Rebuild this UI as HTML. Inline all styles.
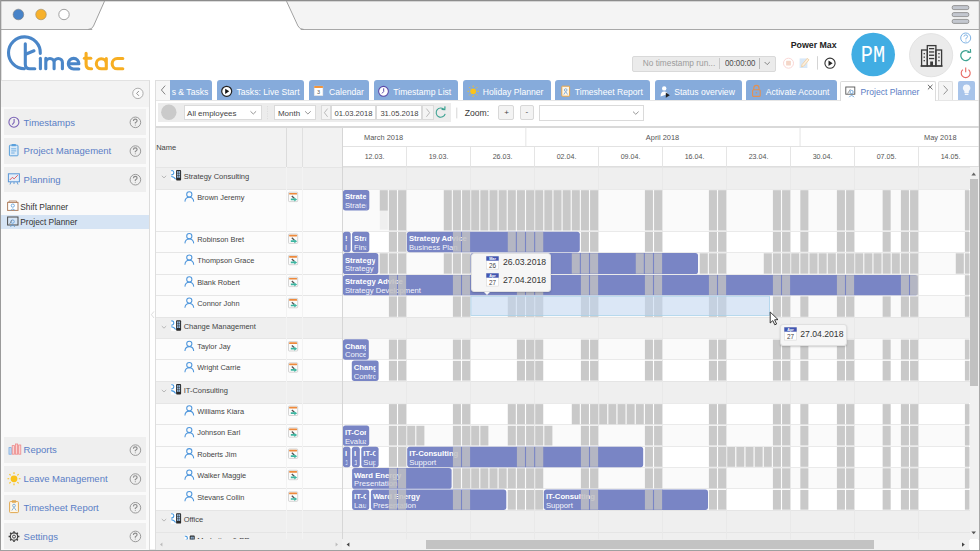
<!DOCTYPE html>
<html><head><meta charset="utf-8"><title>TimeTac Project Planner</title>
<style>
html,body{margin:0;padding:0;}
body{width:980px;height:551px;overflow:hidden;position:relative;background:#fff;font-family:"Liberation Sans", sans-serif;}
.t{position:absolute;white-space:nowrap;}
.b{position:absolute;box-sizing:border-box;}
svg{position:absolute;overflow:visible;}
</style></head><body>
<svg style="left:0;top:0" width="980" height="551" viewBox="0 0 980 551">
<rect x="0" y="0" width="980" height="30" fill="#f4f4f4"/>
<path d="M0 29.5 H93 M300 29.5 H980" stroke="#a8a8a8" stroke-width="1.2"/>
<path d="M92 30 L104.5 1 H286.5 L301 30 Z" fill="#ffffff"/>
<path d="M88 29.5 Q92 29.5 93.5 26 L104.5 1.2 M286.5 1.2 L298 26 Q299.5 29.5 304 29.5" stroke="#a0a0a0" stroke-width="1" fill="none"/>
<rect x="0" y="0" width="980" height="1.3" fill="#8c8c8c"/>
<rect x="0" y="0" width="1.3" height="551" fill="#9a9a9a"/>
<rect x="978.8" y="0" width="1.2" height="551" fill="#a8a8a8"/>
<rect x="0" y="549.8" width="980" height="1.2" fill="#a0a0a0"/>
<circle cx="18.4" cy="14.5" r="5.3" fill="#4783c8" stroke="#7a7a7a" stroke-width="0.6"/>
<circle cx="41" cy="14.5" r="5.3" fill="#f7b12b" stroke="#9a8a6a" stroke-width="0.6"/>
<circle cx="64" cy="14.5" r="5.2" fill="#ffffff" stroke="#8a8a8a" stroke-width="0.8"/>
<g fill="#c3c7cf" stroke="#8e8e8e" stroke-width="0.9">
<rect x="952.2" y="5.6" width="16.6" height="4" rx="1.6"/>
<rect x="952.2" y="12.6" width="16.6" height="4" rx="1.6"/>
<rect x="952.2" y="19.4" width="16.6" height="4" rx="1.6"/>
</g>
</svg><svg style="left:0;top:0" width="140" height="80" viewBox="0 0 140 80">
<g fill="none" stroke="#4a86c8" stroke-width="3.1" stroke-linecap="round" stroke-linejoin="round">
<path d="M24.3 68.7 A15.9 15.9 0 1 1 40.3 53.4"/>
<path d="M25.3 43.8 V64.3 Q25.3 68.8 29.8 68.8 H34.8"/>
<path d="M25.6 54.2 L34 50.8"/>
<path d="M40.4 58.2 V68.8"/>
<path d="M45.8 68.8 V58.4 M45.8 62.6 A4.15 4.15 0 0 1 54.1 62.6 V68.8 M54.1 62.6 A4.15 4.15 0 0 1 62.4 62.6 V68.8"/>
<path d="M68.3 63.8 H78.9 A5.3 5.3 0 1 0 73.6 69 H78.8"/>
</g>
<g fill="none" stroke="#f7ae22" stroke-width="3.1" stroke-linecap="round" stroke-linejoin="round">
<path d="M86.1 53.3 V64.3 Q86.1 68.8 90.6 68.8 H91.6"/>
<path d="M84.4 58.3 H90.8"/>
<path d="M106.3 58.6 V68.8 M106.3 63.7 A5 5 0 1 0 101.3 68.8 H106"/>
<path d="M122.8 58.5 H117.3 A5.15 5.15 0 0 0 117.3 68.8 H122.8"/>
</g>
</svg><div class="t" style="left:790.70px;top:41.15px;font-size:8.8px;line-height:8.8px;color:#222;font-weight:bold;">Power Max</div><div class="b" style="left:632.20px;top:55.70px;width:144.20px;height:16.10px;background:#ebebeb;border:1px solid #d9d9d9;border-radius:2px;"></div><div class="t" style="left:642.80px;top:59.47px;font-size:8.3px;line-height:8.3px;color:#9b9b9b;font-weight:normal;">No timestamp run...</div><div class="b" style="left:719.40px;top:58.20px;width:1.00px;height:11.00px;background:#c9c9c9;"></div><div class="t" style="left:724.80px;top:59.32px;font-size:8.6px;line-height:8.6px;color:#4a4a4a;font-weight:normal;transform:scaleX(0.91);transform-origin:0 0;">00:00:00</div><div class="b" style="left:759.20px;top:58.20px;width:1.00px;height:11.20px;background:#b9b9b9;"></div><svg style="left:0;top:0" width="980" height="80" viewBox="0 0 980 80">
<path d="M764.6 62 L767.2 64.6 L769.8 62" fill="none" stroke="#777" stroke-width="0.9"/>
<circle cx="788.5" cy="63.2" r="5" fill="none" stroke="#f8d2d0" stroke-width="0.9"/>
<rect x="786.1" y="60.8" width="4.8" height="4.8" rx="0.6" fill="#f4d6c8"/>
<path d="M799.6 58.4 h7.8 v9.6 h-7.8 z" fill="#d8e8f8"/>
<path d="M801.6 67 L802 64.6 L807.2 58.4 L809 59.8 L803.8 66 Z" fill="#fbf0e0" stroke="#f2c890" stroke-width="0.7"/>
<rect x="817" y="56.2" width="1" height="13.4" fill="#d4d4d4"/>
<circle cx="830" cy="63.2" r="5.1" fill="none" stroke="#333" stroke-width="1.1"/>
<path d="M828.5 60.5 L832.6 63.2 L828.5 65.9 Z" fill="#222"/>
<circle cx="873.2" cy="54.5" r="21.8" fill="#41ade3"/>
<circle cx="931.1" cy="55.2" r="21.6" fill="#ebebeb" stroke="#dedede" stroke-width="0.8"/>
<g fill="none" stroke="#3a3a3a" stroke-width="1.3">
<rect x="927.3" y="45.6" width="8.6" height="20.4"/>
<rect x="921.6" y="50" width="5.7" height="16"/>
<rect x="935.9" y="50" width="5.7" height="16"/>
<path d="M920.5 66 H942.6"/>
</g>
<g fill="#3a3a3a">
<rect x="929" y="48" width="5.2" height="1.3"/><rect x="929" y="51.3" width="5.2" height="1.3"/>
<rect x="929" y="54.6" width="5.2" height="1.3"/><rect x="929" y="57.9" width="5.2" height="1.3"/>
<rect x="930.2" y="61.5" width="2.8" height="4.5"/>
<rect x="923.6" y="53" width="1.3" height="1.3"/><rect x="923.6" y="56.5" width="1.3" height="1.3"/><rect x="923.6" y="60" width="1.3" height="1.3"/>
<rect x="938.3" y="53" width="1.3" height="1.3"/><rect x="938.3" y="56.5" width="1.3" height="1.3"/><rect x="938.3" y="60" width="1.3" height="1.3"/>
</g>
<circle cx="965.7" cy="38" r="5" fill="none" stroke="#7fb3e4" stroke-width="1"/>
<path d="M963.9 36.6 Q964 34.9 965.8 34.9 Q967.6 34.9 967.6 36.5 Q967.6 37.6 965.9 38.4 V39.4" fill="none" stroke="#7fb3e4" stroke-width="1"/>
<circle cx="965.9" cy="41" r="0.6" fill="#7fb3e4"/>
<path d="M969.8 52.6 A5 5 0 1 0 970.6 56.8" fill="none" stroke="#3fa392" stroke-width="1.3"/>
<path d="M967.4 52.4 L970.6 52.2 L970.4 49" fill="none" stroke="#3fa392" stroke-width="1.2"/>
<path d="M962.9 69.6 A4.5 4.5 0 1 0 968.5 69.6" fill="none" stroke="#e86a64" stroke-width="1.1"/>
<path d="M965.7 67.4 V72.2" stroke="#e86a64" stroke-width="1.1"/>
</svg><div class="t" style="left:673.40px;width:400px;text-align:center;top:44.73px;font-size:23px;line-height:23px;color:#ffffff;font-weight:normal;font-family:'Liberation Mono', monospace;transform:scaleX(0.88);">PM</div><div class="b" style="left:1.30px;top:80.20px;width:148.50px;height:469.60px;background:#fafafa;border-right:1px solid #dcdcdc;border-top:1px solid #e2e2e2;"></div><div class="b" style="left:1.30px;top:81.00px;width:147.50px;height:25.90px;background:#f3f3f3;"></div><svg style="left:0;top:0" width="160" height="551" viewBox="0 0 160 551">
<circle cx="137.9" cy="93.4" r="5.2" fill="#fbfbfb" stroke="#9a9a9a" stroke-width="0.8"/>
<path d="M138.9 91 L136.6 93.4 L138.9 95.8" fill="none" stroke="#888" stroke-width="0.9"/>
</svg><div class="b" style="left:4.00px;top:108.80px;width:142.00px;height:26.70px;background:#efefef;"></div><div class="t" style="left:23.60px;top:117.51px;font-size:9.5px;line-height:9.5px;color:#5a7ec6;font-weight:normal;">Timestamps</div><svg style="left:0;top:0" width="160" height="551" viewBox="0 0 160 551">
<circle cx="135.4" cy="122.35" r="5.3" fill="none" stroke="#9a9a9a" stroke-width="1.0"/>
<path d="M133.4 120.95 Q133.5 119.05 135.3 119.05 Q137.1 119.05 137.1 120.75 Q137.1 121.85 135.3 122.75 V123.55" fill="none" stroke="#8a8a8a" stroke-width="1.15"/>
<circle cx="135.3" cy="124.95" r="0.55" fill="#9c9c9c"/>
</svg><div class="b" style="left:4.00px;top:137.80px;width:142.00px;height:26.20px;background:#efefef;"></div><div class="t" style="left:23.60px;top:146.26px;font-size:9.5px;line-height:9.5px;color:#5a7ec6;font-weight:normal;">Project Management</div><svg style="left:0;top:0" width="160" height="551" viewBox="0 0 160 551">
<circle cx="135.4" cy="151.10" r="5.3" fill="none" stroke="#9a9a9a" stroke-width="1.0"/>
<path d="M133.4 149.70 Q133.5 147.80 135.3 147.80 Q137.1 147.80 137.1 149.50 Q137.1 150.60 135.3 151.50 V152.30" fill="none" stroke="#8a8a8a" stroke-width="1.15"/>
<circle cx="135.3" cy="153.70" r="0.55" fill="#9c9c9c"/>
</svg><div class="b" style="left:4.00px;top:166.90px;width:142.00px;height:25.20px;background:#efefef;"></div><div class="t" style="left:23.60px;top:174.86px;font-size:9.5px;line-height:9.5px;color:#5a7ec6;font-weight:normal;">Planning</div><svg style="left:0;top:0" width="160" height="551" viewBox="0 0 160 551">
<circle cx="135.4" cy="179.70" r="5.3" fill="none" stroke="#9a9a9a" stroke-width="1.0"/>
<path d="M133.4 178.30 Q133.5 176.40 135.3 176.40 Q137.1 176.40 137.1 178.10 Q137.1 179.20 135.3 180.10 V180.90" fill="none" stroke="#8a8a8a" stroke-width="1.15"/>
<circle cx="135.3" cy="182.30" r="0.55" fill="#9c9c9c"/>
</svg><div class="b" style="left:4.00px;top:437.00px;width:142.00px;height:25.90px;background:#efefef;"></div><div class="t" style="left:23.60px;top:445.31px;font-size:9.5px;line-height:9.5px;color:#5a7ec6;font-weight:normal;">Reports</div><svg style="left:0;top:0" width="160" height="551" viewBox="0 0 160 551">
<circle cx="135.4" cy="450.15" r="5.3" fill="none" stroke="#9a9a9a" stroke-width="1.0"/>
<path d="M133.4 448.75 Q133.5 446.85 135.3 446.85 Q137.1 446.85 137.1 448.55 Q137.1 449.65 135.3 450.55 V451.35" fill="none" stroke="#8a8a8a" stroke-width="1.15"/>
<circle cx="135.3" cy="452.75" r="0.55" fill="#9c9c9c"/>
</svg><div class="b" style="left:4.00px;top:465.80px;width:142.00px;height:26.10px;background:#efefef;"></div><div class="t" style="left:23.60px;top:474.21px;font-size:9.5px;line-height:9.5px;color:#5a7ec6;font-weight:normal;">Leave Management</div><svg style="left:0;top:0" width="160" height="551" viewBox="0 0 160 551">
<circle cx="135.4" cy="479.05" r="5.3" fill="none" stroke="#9a9a9a" stroke-width="1.0"/>
<path d="M133.4 477.65 Q133.5 475.75 135.3 475.75 Q137.1 475.75 137.1 477.45 Q137.1 478.55 135.3 479.45 V480.25" fill="none" stroke="#8a8a8a" stroke-width="1.15"/>
<circle cx="135.3" cy="481.65" r="0.55" fill="#9c9c9c"/>
</svg><div class="b" style="left:4.00px;top:494.70px;width:142.00px;height:25.70px;background:#efefef;"></div><div class="t" style="left:23.60px;top:502.91px;font-size:9.5px;line-height:9.5px;color:#5a7ec6;font-weight:normal;">Timesheet Report</div><svg style="left:0;top:0" width="160" height="551" viewBox="0 0 160 551">
<circle cx="135.4" cy="507.75" r="5.3" fill="none" stroke="#9a9a9a" stroke-width="1.0"/>
<path d="M133.4 506.35 Q133.5 504.45 135.3 504.45 Q137.1 504.45 137.1 506.15 Q137.1 507.25 135.3 508.15 V508.95" fill="none" stroke="#8a8a8a" stroke-width="1.15"/>
<circle cx="135.3" cy="510.35" r="0.55" fill="#9c9c9c"/>
</svg><div class="b" style="left:4.00px;top:523.30px;width:142.00px;height:25.90px;background:#efefef;"></div><div class="t" style="left:23.60px;top:531.61px;font-size:9.5px;line-height:9.5px;color:#5a7ec6;font-weight:normal;">Settings</div><svg style="left:0;top:0" width="160" height="551" viewBox="0 0 160 551">
<circle cx="135.4" cy="536.45" r="5.3" fill="none" stroke="#9a9a9a" stroke-width="1.0"/>
<path d="M133.4 535.05 Q133.5 533.15 135.3 533.15 Q137.1 533.15 137.1 534.85 Q137.1 535.95 135.3 536.85 V537.65" fill="none" stroke="#8a8a8a" stroke-width="1.15"/>
<circle cx="135.3" cy="539.05" r="0.55" fill="#9c9c9c"/>
</svg><svg style="left:0;top:0" width="160" height="551" viewBox="0 0 160 551">
<circle cx="13.9" cy="122.2" r="5" fill="none" stroke="#7a62b6" stroke-width="1.1"/>
<path d="M14.1 118.9 V122.4 L12.3 124.6" fill="none" stroke="#7a62b6" stroke-width="1.1"/>
<rect x="9.4" y="145.2" width="8.6" height="10.6" rx="0.8" fill="#dcebf8" stroke="#5aa0dc" stroke-width="1"/>
<rect x="11.6" y="144" width="4.2" height="2.2" fill="#5aa0dc"/>
<path d="M11.2 148.8 H16.2 M11.2 150.9 H16.2 M11.2 153 H14.6" stroke="#5aa0dc" stroke-width="0.8"/>
<rect x="8.4" y="173.8" width="11" height="8" fill="#e4eefa" stroke="#5a96d6" stroke-width="1"/>
<path d="M9.8 180 L12.3 177.4 L14.2 178.8 L17.8 175.2" fill="none" stroke="#e05050" stroke-width="0.9"/>
<path d="M11 182 L10 184.5 M17 182 L18 184.5 M14 182 V184" stroke="#5a96d6" stroke-width="0.9"/>
<rect x="9" y="447.6" width="2.2" height="6.6" fill="#cfe2f6" stroke="#74a8e0" stroke-width="0.8"/>
<rect x="12.2" y="445.6" width="2.2" height="8.6" fill="#f8d4d4" stroke="#ee8a8a" stroke-width="0.8"/>
<rect x="15.4" y="444" width="2.2" height="10.2" fill="#f8d4d4" stroke="#ee8a8a" stroke-width="0.8"/>
<rect x="18.6" y="445" width="2.2" height="9.2" fill="#f8d4d4" stroke="#ee8a8a" stroke-width="0.8"/>
<circle cx="14" cy="478.8" r="3.4" fill="#f9c21a"/>
<g stroke="#f9c21a" stroke-width="1.1">
<path d="M14 472.3 V474 M14 483.6 V485.3 M7.5 478.8 H9.2 M18.8 478.8 H20.5 M9.4 474.2 L10.6 475.4 M17.4 482.2 L18.6 483.4 M9.4 483.4 L10.6 482.2 M17.4 475.4 L18.6 474.2"/>
</g>
<rect x="9.6" y="501.6" width="8.8" height="11" rx="0.8" fill="#fff7e8" stroke="#e0a850" stroke-width="1"/>
<rect x="12" y="500.3" width="4" height="2.4" fill="#e0a850"/>
<circle cx="14" cy="505.6" r="1.4" fill="none" stroke="#6aa2d8" stroke-width="0.8"/>
<path d="M11.8 510.5 L14 507.3 L16.2 510.5" fill="none" stroke="#6aa2d8" stroke-width="0.8"/>
<g transform="translate(14 536.6)">
<circle r="3.7" fill="none" stroke="#3c3c3c" stroke-width="1.1"/>
<circle r="1.5" fill="none" stroke="#3c3c3c" stroke-width="0.9"/>
<g stroke="#3c3c3c" stroke-width="1.5">
<path d="M0 -5.4 V-3.8 M0 5.4 V3.8 M-5.4 0 H-3.8 M5.4 0 H3.8 M-3.8 -3.8 L-2.7 -2.7 M3.8 3.8 L2.7 2.7 M-3.8 3.8 L-2.7 2.7 M3.8 -3.8 L2.7 -2.7"/>
</g></g>
<rect x="7.6" y="202.4" width="10.4" height="8" fill="#fff" stroke="#b08060" stroke-width="1"/>
<circle cx="12.8" cy="205.6" r="1.6" fill="none" stroke="#5a9ad8" stroke-width="0.8"/>
<path d="M10.6 210.4 Q12.8 207.4 15 210.4" fill="none" stroke="#5a9ad8" stroke-width="0.8"/>
<path d="M9 202.4 V201 H16.6 V202.4" fill="none" stroke="#b08060" stroke-width="0.8"/>
</svg><div class="b" style="left:1.30px;top:214.80px;width:147.50px;height:14.20px;background:#d6e4f4;"></div><svg style="left:0;top:0" width="160" height="551" viewBox="0 0 160 551">
<rect x="7.6" y="217" width="10.4" height="8" fill="none" stroke="#4a4a4a" stroke-width="1"/>
<circle cx="12.6" cy="221.6" r="1.7" fill="none" stroke="#5a9ad8" stroke-width="0.8"/>
<path d="M10.4 227 Q12.6 223.2 14.8 227" fill="none" stroke="#5a9ad8" stroke-width="0.8"/>
<path d="M9.6 224 L12 220" stroke="#777" stroke-width="0.7"/>
</svg><div class="t" style="left:20.30px;top:203.23px;font-size:8.35px;line-height:8.35px;color:#333;font-weight:normal;">Shift Planner</div><div class="t" style="left:20.30px;top:218.13px;font-size:8.35px;line-height:8.35px;color:#333;font-weight:normal;">Project Planner</div><div class="b" style="left:155.20px;top:80.20px;width:1.00px;height:469.60px;background:#dedede;"></div><div class="b" style="left:156.00px;top:99.80px;width:822.80px;height:1.00px;background:#e6e6e6;"></div><div class="b" style="left:156.20px;top:80.20px;width:14.40px;height:19.80px;background:#f6f6f6;border-top:1px solid #dedede;"></div><svg style="left:0;top:0" width="980" height="130" viewBox="0 0 980 130">
<path d="M165.2 85.6 L161.4 90 L165.2 94.4" fill="none" stroke="#777" stroke-width="0.9"/>
</svg><div class="b" style="left:170.40px;top:80.20px;width:42.10px;height:19.60px;background:#86abdb;border-radius:0 3px 0 0;"></div><div class="t" style="left:171.70px;top:87.52px;font-size:8.6px;line-height:8.6px;color:#ffffff;font-weight:normal;">s &amp; Tasks</div><div class="b" style="left:217.00px;top:80.20px;width:87.30px;height:19.60px;background:#86abdb;border-radius:3px 3px 0 0;"></div><div class="t" style="left:236.50px;top:87.52px;font-size:8.6px;line-height:8.6px;color:#ffffff;font-weight:normal;">Tasks: Live Start</div><div class="b" style="left:309.20px;top:80.20px;width:59.60px;height:19.60px;background:#86abdb;border-radius:3px 3px 0 0;"></div><div class="t" style="left:329.00px;top:87.52px;font-size:8.6px;line-height:8.6px;color:#ffffff;font-weight:normal;">Calendar</div><div class="b" style="left:374.00px;top:80.20px;width:84.40px;height:19.60px;background:#86abdb;border-radius:3px 3px 0 0;"></div><div class="t" style="left:393.30px;top:87.52px;font-size:8.6px;line-height:8.6px;color:#ffffff;font-weight:normal;">Timestamp List</div><div class="b" style="left:463.10px;top:80.20px;width:87.60px;height:19.60px;background:#86abdb;border-radius:3px 3px 0 0;"></div><div class="t" style="left:482.70px;top:87.52px;font-size:8.6px;line-height:8.6px;color:#ffffff;font-weight:normal;">Holiday Planner</div><div class="b" style="left:555.20px;top:80.20px;width:94.80px;height:19.60px;background:#86abdb;border-radius:3px 3px 0 0;"></div><div class="t" style="left:574.80px;top:87.52px;font-size:8.6px;line-height:8.6px;color:#ffffff;font-weight:normal;">Timesheet Report</div><div class="b" style="left:654.60px;top:80.20px;width:87.20px;height:19.60px;background:#86abdb;border-radius:3px 3px 0 0;"></div><div class="t" style="left:674.20px;top:87.52px;font-size:8.6px;line-height:8.6px;color:#ffffff;font-weight:normal;">Status overview</div><div class="b" style="left:746.00px;top:80.20px;width:90.60px;height:19.60px;background:#86abdb;border-radius:3px 3px 0 0;"></div><div class="t" style="left:765.80px;top:87.52px;font-size:8.6px;line-height:8.6px;color:#ffffff;font-weight:normal;">Activate Account</div><svg style="left:0;top:1.1px" width="980" height="130" viewBox="0 0 980 130">
<circle cx="226.7" cy="90.3" r="5" fill="#ffffff" stroke="#222" stroke-width="1.2"/>
<path d="M225.2 87.7 L229.2 90.3 L225.2 92.9 Z" fill="#111"/>
<rect x="314.2" y="85.1" width="8.7" height="9.6" fill="#fff" stroke="#ddd" stroke-width="0.5"/>
<rect x="314.2" y="85.1" width="8.7" height="1.8" fill="#ef8a2a"/>
<text x="318.5" y="93.3" font-size="5.5" text-anchor="middle" fill="#555" font-family="Liberation Sans">3</text>
<circle cx="383.5" cy="90.3" r="4.9" fill="#fff" stroke="#5b4aa8" stroke-width="1.1"/>
<path d="M383.7 87.3 V90.5 L382 92.4" fill="none" stroke="#5b4aa8" stroke-width="1"/>
<circle cx="473.2" cy="90.3" r="2.9" fill="#fbc31a"/>
<g stroke="#fbc31a" stroke-width="1"><path d="M473.2 84.6 V86 M473.2 94.6 V96 M467.5 90.3 H468.9 M477.5 90.3 H478.9 M469.2 86.3 L470.2 87.3 M476.2 93.3 L477.2 94.3 M469.2 94.3 L470.2 93.3 M476.2 87.3 L477.2 86.3"/></g>
<rect x="561.8" y="85.2" width="7.8" height="10" rx="0.6" fill="#fff6e6" stroke="#e4a44a" stroke-width="1"/>
<circle cx="565.7" cy="89" r="1.3" fill="none" stroke="#6aa0d8" stroke-width="0.8"/>
<path d="M563.8 93.5 L565.7 90.6 L567.6 93.5" fill="none" stroke="#6aa0d8" stroke-width="0.8"/>
<circle cx="664.2" cy="87.4" r="2.2" fill="#fff"/>
<path d="M660.6 95.5 Q660.6 90.6 664.2 90.6 Q667 90.6 667.6 93" fill="#fff"/>
<path d="M665.8 91.6 L669.8 94.2 L665.8 96.8 Z" fill="#222"/>
<path d="M753.8 88.8 V87 A2.6 2.6 0 0 1 759 87 V88.8" fill="none" stroke="#e49050" stroke-width="1.1"/>
<rect x="752.6" y="88.8" width="7.6" height="6.6" rx="1" fill="none" stroke="#e49050" stroke-width="1.1"/>
<rect x="755.6" y="91.2" width="1.6" height="1.2" fill="#e49050"/>
</svg><div class="b" style="left:840.40px;top:80.60px;width:95.20px;height:20.20px;background:#fff;border:1px solid #dcdcdc;border-bottom:none;border-radius:2px 2px 0 0;"></div><div class="t" style="left:860.60px;top:87.72px;font-size:8.6px;line-height:8.6px;color:#5b7dc4;font-weight:normal;">Project Planner</div><svg style="left:0;top:1.2px" width="980" height="130" viewBox="0 0 980 130">
<rect x="845.8" y="86" width="9" height="7.2" fill="none" stroke="#555" stroke-width="0.9"/>
<circle cx="851.6" cy="91" r="1.6" fill="none" stroke="#5a9ad8" stroke-width="0.8"/>
<path d="M849.2 96.2 Q851.6 92.8 854 96.2" fill="none" stroke="#5a9ad8" stroke-width="0.8"/>
<path d="M847.6 92.5 L850.4 88.2" stroke="#777" stroke-width="0.7"/>
<path d="M927.9 83.8 L932.5 88.4 M932.5 83.8 L927.9 88.4" stroke="#555" stroke-width="0.9"/>
</svg><div class="b" style="left:938.00px;top:80.60px;width:15.20px;height:19.40px;background:#f5f5f5;border:1px solid #dedede;border-bottom:none;border-radius:2px 2px 0 0;"></div><div class="b" style="left:957.80px;top:80.60px;width:17.60px;height:19.40px;background:#a8c4ea;border-radius:2px 2px 0 0;"></div><svg style="left:0;top:0" width="980" height="130" viewBox="0 0 980 130">
<path d="M943.6 85.6 L947.6 90 L943.6 94.4" fill="none" stroke="#888" stroke-width="0.9"/>
<path d="M966.6 84.6 A3.6 3.6 0 0 1 968.8 91.2 V93 H964.4 V91.2 A3.6 3.6 0 0 1 966.6 84.6 Z" fill="#f4f7fc"/>
<rect x="964.8" y="93.6" width="3.6" height="1.4" fill="#f4f7fc"/>
</svg><div class="b" style="left:157.80px;top:103.20px;width:293.00px;height:18.80px;background:#ececec;"></div><svg style="left:0;top:0" width="980" height="130" viewBox="0 0 980 130">
<circle cx="168.8" cy="112.3" r="7.7" fill="#cacaca"/>
</svg><div class="b" style="left:183.50px;top:105.20px;width:78.00px;height:15.00px;background:#fff;border:1px solid #dadada;"></div><svg style="left:0;top:0" width="980" height="130"><path d="M250.50 111.30 L253.30 114.00 L256.10 111.30" fill="none" stroke="#888" stroke-width="0.9"/></svg><div class="t" style="left:187.10px;top:109.77px;font-size:7.95px;line-height:7.95px;color:#444;font-weight:normal;">All employees</div><svg style="left:0;top:0" width="980" height="130"><path d="M267.5 106 V120" stroke="#dadada" stroke-width="0.8" stroke-dasharray="1.2 1.2"/></svg><div class="b" style="left:274.30px;top:105.20px;width:41.80px;height:15.00px;background:#fff;border:1px solid #dadada;"></div><svg style="left:0;top:0" width="980" height="130"><path d="M305.10 111.30 L307.90 114.00 L310.70 111.30" fill="none" stroke="#888" stroke-width="0.9"/></svg><div class="t" style="left:278.00px;top:109.77px;font-size:7.95px;line-height:7.95px;color:#444;font-weight:normal;">Month</div><div class="b" style="left:320.80px;top:105.20px;width:10.40px;height:15.00px;background:#f4f4f4;border:1px solid #dadada;"></div><div class="b" style="left:331.00px;top:105.20px;width:45.20px;height:15.00px;background:#fff;border:1px solid #dadada;"></div><div class="b" style="left:376.00px;top:105.20px;width:46.20px;height:15.00px;background:#fff;border:1px solid #dadada;"></div><div class="b" style="left:422.00px;top:105.20px;width:11.60px;height:15.00px;background:#f4f4f4;border:1px solid #dadada;"></div><div class="t" style="left:334.50px;top:110.07px;font-size:7.6px;line-height:7.6px;color:#444;font-weight:normal;">01.03.2018</div><div class="t" style="left:380.40px;top:110.07px;font-size:7.6px;line-height:7.6px;color:#444;font-weight:normal;">31.05.2018</div><svg style="left:0;top:0" width="980" height="130" viewBox="0 0 980 130">
<path d="M327.6 108.6 L324.4 112.7 L327.6 116.8" fill="none" stroke="#aaa" stroke-width="0.8"/>
<path d="M426.4 108.6 L429.6 112.7 L426.4 116.8" fill="none" stroke="#aaa" stroke-width="0.8"/>
<path d="M444.4 109.8 A4.6 4.6 0 1 0 445.2 113.8" fill="none" stroke="#3aa191" stroke-width="1.1"/>
<path d="M441.6 109.4 L444.8 109.6 L445 106.4" fill="none" stroke="#3aa191" stroke-width="1.2"/>
<path d="M456.8 107.6 V118.4" stroke="#d0d0d0" stroke-width="0.9"/>
</svg><div class="t" style="left:464.70px;top:108.72px;font-size:8.6px;line-height:8.6px;color:#3a3a3a;font-weight:normal;">Zoom:</div><div class="b" style="left:498.40px;top:105.20px;width:16.10px;height:15.30px;background:#f3f3f3;border:1px solid #d8d8d8;border-radius:2px;"></div><div class="b" style="left:519.80px;top:105.20px;width:14.10px;height:15.30px;background:#f3f3f3;border:1px solid #d8d8d8;border-radius:2px;"></div><div class="t" style="left:306.50px;width:400px;text-align:center;top:108.53px;font-size:8px;line-height:8px;color:#444;font-weight:normal;">+</div><div class="t" style="left:326.90px;width:400px;text-align:center;top:108.23px;font-size:8px;line-height:8px;color:#444;font-weight:normal;">-</div><div class="b" style="left:539.30px;top:105.20px;width:104.70px;height:15.60px;background:#fff;border:1px solid #dadada;"></div><svg style="left:0;top:0" width="980" height="130"><path d="M633.00 111.60 L635.80 114.30 L638.60 111.60" fill="none" stroke="#888" stroke-width="0.9"/></svg><div class="b" style="left:156.00px;top:126.20px;width:822.80px;height:1.40px;background:#d9d9d9;"></div><div class="b" style="left:156.00px;top:127.60px;width:186.20px;height:39.60px;background:#f2f2f2;"></div><div class="t" style="left:156.20px;top:143.55px;font-size:7.5px;line-height:7.5px;color:#444;font-weight:normal;">Name</div><div class="b" style="left:156.00px;top:166.50px;width:813.50px;height:22.90px;background:#efefef;border-top:1px solid #e5e5e5;"></div><div class="b" style="left:156.00px;top:188.70px;width:186.20px;height:42.50px;background:#fcfcfc;border-top:1px solid #e6e6e6;"></div><div class="b" style="left:342.20px;top:188.70px;width:627.30px;height:42.50px;background:#fafafa;border-top:1px solid #eaeaea;"></div><div class="b" style="left:156.00px;top:230.50px;width:186.20px;height:22.00px;background:#fcfcfc;border-top:1px solid #e6e6e6;"></div><div class="b" style="left:342.20px;top:230.50px;width:627.30px;height:22.00px;background:#ffffff;border-top:1px solid #eaeaea;"></div><div class="b" style="left:156.00px;top:251.80px;width:186.20px;height:22.60px;background:#fcfcfc;border-top:1px solid #e6e6e6;"></div><div class="b" style="left:342.20px;top:251.80px;width:627.30px;height:22.60px;background:#fafafa;border-top:1px solid #eaeaea;"></div><div class="b" style="left:156.00px;top:273.70px;width:186.20px;height:21.90px;background:#fcfcfc;border-top:1px solid #e6e6e6;"></div><div class="b" style="left:342.20px;top:273.70px;width:627.30px;height:21.90px;background:#ffffff;border-top:1px solid #eaeaea;"></div><div class="b" style="left:156.00px;top:294.90px;width:186.20px;height:22.60px;background:#fcfcfc;border-top:1px solid #e6e6e6;"></div><div class="b" style="left:342.20px;top:294.90px;width:627.30px;height:22.60px;background:#fafafa;border-top:1px solid #eaeaea;"></div><div class="b" style="left:156.00px;top:316.80px;width:813.50px;height:22.00px;background:#efefef;border-top:1px solid #e5e5e5;"></div><div class="b" style="left:156.00px;top:338.10px;width:186.20px;height:21.90px;background:#fcfcfc;border-top:1px solid #e6e6e6;"></div><div class="b" style="left:342.20px;top:338.10px;width:627.30px;height:21.90px;background:#fafafa;border-top:1px solid #eaeaea;"></div><div class="b" style="left:156.00px;top:359.30px;width:186.20px;height:22.00px;background:#fcfcfc;border-top:1px solid #e6e6e6;"></div><div class="b" style="left:342.20px;top:359.30px;width:627.30px;height:22.00px;background:#ffffff;border-top:1px solid #eaeaea;"></div><div class="b" style="left:156.00px;top:380.60px;width:813.50px;height:22.70px;background:#efefef;border-top:1px solid #e5e5e5;"></div><div class="b" style="left:156.00px;top:402.60px;width:186.20px;height:22.40px;background:#fcfcfc;border-top:1px solid #e6e6e6;"></div><div class="b" style="left:342.20px;top:402.60px;width:627.30px;height:22.40px;background:#ffffff;border-top:1px solid #eaeaea;"></div><div class="b" style="left:156.00px;top:424.30px;width:186.20px;height:21.90px;background:#fcfcfc;border-top:1px solid #e6e6e6;"></div><div class="b" style="left:342.20px;top:424.30px;width:627.30px;height:21.90px;background:#fafafa;border-top:1px solid #eaeaea;"></div><div class="b" style="left:156.00px;top:445.50px;width:186.20px;height:22.00px;background:#fcfcfc;border-top:1px solid #e6e6e6;"></div><div class="b" style="left:342.20px;top:445.50px;width:627.30px;height:22.00px;background:#ffffff;border-top:1px solid #eaeaea;"></div><div class="b" style="left:156.00px;top:466.80px;width:186.20px;height:22.30px;background:#fcfcfc;border-top:1px solid #e6e6e6;"></div><div class="b" style="left:342.20px;top:466.80px;width:627.30px;height:22.30px;background:#fafafa;border-top:1px solid #eaeaea;"></div><div class="b" style="left:156.00px;top:488.40px;width:186.20px;height:22.00px;background:#fcfcfc;border-top:1px solid #e6e6e6;"></div><div class="b" style="left:342.20px;top:488.40px;width:627.30px;height:22.00px;background:#ffffff;border-top:1px solid #eaeaea;"></div><div class="b" style="left:156.00px;top:509.70px;width:813.50px;height:22.50px;background:#efefef;border-top:1px solid #e5e5e5;"></div><div class="b" style="left:156.00px;top:531.50px;width:813.50px;height:8.00px;background:#efefef;border-top:1px solid #e5e5e5;"></div><div class="b" style="left:286.00px;top:127.60px;width:1.00px;height:39.60px;background:#dcdcdc;"></div><div class="b" style="left:302.00px;top:127.60px;width:1.00px;height:39.60px;background:#e0e0e0;"></div><div class="b" style="left:286.00px;top:167.20px;width:1.00px;height:372.30px;background:#f3f3f3;"></div><div class="b" style="left:302.00px;top:167.20px;width:1.00px;height:372.30px;background:#f3f3f3;"></div><div class="b" style="left:342.60px;top:127.60px;width:626.90px;height:39.60px;background:#fff;"></div><div class="b" style="left:342.60px;top:146.20px;width:636.20px;height:1.00px;background:#e2e2e2;"></div><div class="b" style="left:342.60px;top:166.40px;width:636.20px;height:1.00px;background:#dedede;"></div><svg style="left:0;top:0" width="980" height="551" viewBox="0 0 980 551"><rect x="525.40" y="127.6" width="0.9" height="18.8" fill="#e2e2e2"/><rect x="799.60" y="127.6" width="0.9" height="18.8" fill="#e2e2e2"/><rect x="406.05" y="147" width="0.9" height="20" fill="#e2e2e2"/><rect x="470.05" y="147" width="0.9" height="20" fill="#e2e2e2"/><rect x="534.05" y="147" width="0.9" height="20" fill="#e2e2e2"/><rect x="598.05" y="147" width="0.9" height="20" fill="#e2e2e2"/><rect x="662.05" y="147" width="0.9" height="20" fill="#e2e2e2"/><rect x="726.05" y="147" width="0.9" height="20" fill="#e2e2e2"/><rect x="790.05" y="147" width="0.9" height="20" fill="#e2e2e2"/><rect x="854.05" y="147" width="0.9" height="20" fill="#e2e2e2"/><rect x="918.05" y="147" width="0.9" height="20" fill="#e2e2e2"/></svg><div class="t" style="left:183.60px;width:400px;text-align:center;top:134.04px;font-size:7.4px;line-height:7.4px;color:#555;font-weight:normal;">March 2018</div><div class="t" style="left:462.50px;width:400px;text-align:center;top:134.04px;font-size:7.4px;line-height:7.4px;color:#555;font-weight:normal;">April 2018</div><div class="t" style="left:740.30px;width:400px;text-align:center;top:134.04px;font-size:7.4px;line-height:7.4px;color:#555;font-weight:normal;">May 2018</div><div class="t" style="left:174.50px;width:400px;text-align:center;top:154.49px;font-size:7.1px;line-height:7.1px;color:#555;font-weight:normal;">12.03.</div><div class="t" style="left:238.50px;width:400px;text-align:center;top:154.49px;font-size:7.1px;line-height:7.1px;color:#555;font-weight:normal;">19.03.</div><div class="t" style="left:302.50px;width:400px;text-align:center;top:154.49px;font-size:7.1px;line-height:7.1px;color:#555;font-weight:normal;">26.03.</div><div class="t" style="left:366.50px;width:400px;text-align:center;top:154.49px;font-size:7.1px;line-height:7.1px;color:#555;font-weight:normal;">02.04.</div><div class="t" style="left:430.50px;width:400px;text-align:center;top:154.49px;font-size:7.1px;line-height:7.1px;color:#555;font-weight:normal;">09.04.</div><div class="t" style="left:494.50px;width:400px;text-align:center;top:154.49px;font-size:7.1px;line-height:7.1px;color:#555;font-weight:normal;">16.04.</div><div class="t" style="left:558.50px;width:400px;text-align:center;top:154.49px;font-size:7.1px;line-height:7.1px;color:#555;font-weight:normal;">23.04.</div><div class="t" style="left:622.50px;width:400px;text-align:center;top:154.49px;font-size:7.1px;line-height:7.1px;color:#555;font-weight:normal;">30.04.</div><div class="t" style="left:686.50px;width:400px;text-align:center;top:154.49px;font-size:7.1px;line-height:7.1px;color:#555;font-weight:normal;">07.05.</div><div class="t" style="left:750.50px;width:400px;text-align:center;top:154.49px;font-size:7.1px;line-height:7.1px;color:#555;font-weight:normal;">14.05.</div><svg style="left:0;top:0" width="980" height="551" viewBox="0 0 980 551"><defs><clipPath id="gc"><rect x="342.6" y="167.2" width="626.9" height="372.3"/></clipPath><clipPath id="nc"><rect x="156" y="167.2" width="186.2" height="372.3"/></clipPath></defs><g clip-path="url(#gc)"><rect x="406.05" y="167.2" width="0.9" height="372.3" fill="#e8e8e8"/><rect x="470.05" y="167.2" width="0.9" height="372.3" fill="#e8e8e8"/><rect x="534.05" y="167.2" width="0.9" height="372.3" fill="#e8e8e8"/><rect x="598.05" y="167.2" width="0.9" height="372.3" fill="#e8e8e8"/><rect x="662.05" y="167.2" width="0.9" height="372.3" fill="#e8e8e8"/><rect x="726.05" y="167.2" width="0.9" height="372.3" fill="#e8e8e8"/><rect x="790.05" y="167.2" width="0.9" height="372.3" fill="#e8e8e8"/><rect x="854.05" y="167.2" width="0.9" height="372.3" fill="#e8e8e8"/><rect x="918.05" y="167.2" width="0.9" height="372.3" fill="#e8e8e8"/><rect x="388.91" y="190.20" width="8.04" height="40.30" fill="#c9c9c9"/><rect x="398.06" y="190.20" width="8.04" height="40.30" fill="#c9c9c9"/><rect x="443.77" y="190.20" width="8.04" height="40.30" fill="#c9c9c9"/><rect x="452.91" y="190.20" width="8.04" height="40.30" fill="#c9c9c9"/><rect x="462.06" y="190.20" width="8.04" height="40.30" fill="#c9c9c9"/><rect x="471.20" y="190.20" width="8.04" height="40.30" fill="#c9c9c9"/><rect x="480.34" y="190.20" width="8.04" height="40.30" fill="#c9c9c9"/><rect x="489.49" y="190.20" width="8.04" height="40.30" fill="#c9c9c9"/><rect x="498.63" y="190.20" width="8.04" height="40.30" fill="#c9c9c9"/><rect x="507.77" y="190.20" width="8.04" height="40.30" fill="#c9c9c9"/><rect x="516.91" y="190.20" width="8.04" height="40.30" fill="#c9c9c9"/><rect x="526.06" y="190.20" width="8.04" height="40.30" fill="#c9c9c9"/><rect x="535.20" y="190.20" width="8.04" height="40.30" fill="#c9c9c9"/><rect x="544.34" y="190.20" width="8.04" height="40.30" fill="#c9c9c9"/><rect x="553.49" y="190.20" width="8.04" height="40.30" fill="#c9c9c9"/><rect x="562.63" y="190.20" width="8.04" height="40.30" fill="#c9c9c9"/><rect x="571.77" y="190.20" width="8.04" height="40.30" fill="#c9c9c9"/><rect x="580.91" y="190.20" width="8.04" height="40.30" fill="#c9c9c9"/><rect x="590.06" y="190.20" width="8.04" height="40.30" fill="#c9c9c9"/><rect x="644.91" y="190.20" width="8.04" height="40.30" fill="#c9c9c9"/><rect x="654.06" y="190.20" width="8.04" height="40.30" fill="#c9c9c9"/><rect x="708.91" y="190.20" width="8.04" height="40.30" fill="#c9c9c9"/><rect x="718.06" y="190.20" width="8.04" height="40.30" fill="#c9c9c9"/><rect x="772.91" y="190.20" width="8.04" height="40.30" fill="#c9c9c9"/><rect x="782.06" y="190.20" width="8.04" height="40.30" fill="#c9c9c9"/><rect x="800.34" y="190.20" width="8.04" height="40.30" fill="#c9c9c9"/><rect x="836.91" y="190.20" width="8.04" height="40.30" fill="#c9c9c9"/><rect x="846.06" y="190.20" width="8.04" height="40.30" fill="#c9c9c9"/><rect x="882.63" y="190.20" width="8.04" height="40.30" fill="#c9c9c9"/><rect x="900.91" y="190.20" width="8.04" height="40.30" fill="#c9c9c9"/><rect x="910.06" y="190.20" width="8.04" height="40.30" fill="#c9c9c9"/><rect x="964.91" y="190.20" width="8.04" height="40.30" fill="#c9c9c9"/><rect x="974.06" y="190.20" width="8.04" height="40.30" fill="#c9c9c9"/><rect x="379.77" y="190.20" width="8.04" height="20.60" fill="#c9c9c9"/><rect x="379.77" y="210.80" width="8.04" height="18.80" fill="#efefef"/><clipPath id="bc1"><rect x="342.90" y="189.90" width="23.40" height="20.50"/></clipPath><rect x="342.90" y="189.90" width="26.40" height="20.50" rx="2.6" fill="#7985c5"/><g clip-path="url(#bc1)"><text x="344.90" y="199.40" font-family="Liberation Sans" font-weight="bold" font-size="7.7" fill="#fff">Strategy Consulting</text><text x="344.90" y="207.90" font-family="Liberation Sans" font-size="7.7" fill="#f4f5fb">Strategy Consulting</text></g><rect x="388.91" y="232.00" width="8.04" height="19.80" fill="#c9c9c9"/><rect x="398.06" y="232.00" width="8.04" height="19.80" fill="#c9c9c9"/><rect x="580.91" y="232.00" width="8.04" height="19.80" fill="#c9c9c9"/><rect x="590.06" y="232.00" width="8.04" height="19.80" fill="#c9c9c9"/><rect x="644.91" y="232.00" width="8.04" height="19.80" fill="#c9c9c9"/><rect x="654.06" y="232.00" width="8.04" height="19.80" fill="#c9c9c9"/><rect x="708.91" y="232.00" width="8.04" height="19.80" fill="#c9c9c9"/><rect x="718.06" y="232.00" width="8.04" height="19.80" fill="#c9c9c9"/><rect x="772.91" y="232.00" width="8.04" height="19.80" fill="#c9c9c9"/><rect x="782.06" y="232.00" width="8.04" height="19.80" fill="#c9c9c9"/><rect x="800.34" y="232.00" width="8.04" height="19.80" fill="#c9c9c9"/><rect x="836.91" y="232.00" width="8.04" height="19.80" fill="#c9c9c9"/><rect x="846.06" y="232.00" width="8.04" height="19.80" fill="#c9c9c9"/><rect x="882.63" y="232.00" width="8.04" height="19.80" fill="#c9c9c9"/><rect x="900.91" y="232.00" width="8.04" height="19.80" fill="#c9c9c9"/><rect x="910.06" y="232.00" width="8.04" height="19.80" fill="#c9c9c9"/><rect x="964.91" y="232.00" width="8.04" height="19.80" fill="#c9c9c9"/><rect x="974.06" y="232.00" width="8.04" height="19.80" fill="#c9c9c9"/><clipPath id="bc2"><rect x="342.90" y="231.70" width="4.80" height="20.45"/></clipPath><rect x="342.90" y="231.70" width="7.80" height="20.45" rx="2.6" fill="#7985c5"/><g clip-path="url(#bc2)"><text x="344.90" y="241.20" font-family="Liberation Sans" font-weight="bold" font-size="7.7" fill="#fff">!</text><text x="344.90" y="249.70" font-family="Liberation Sans" font-size="7.7" fill="#f4f5fb">I</text></g><clipPath id="bc3"><rect x="352.10" y="231.70" width="14.20" height="20.45"/></clipPath><rect x="352.10" y="231.70" width="17.20" height="20.45" rx="2.6" fill="#7985c5"/><g clip-path="url(#bc3)"><text x="354.10" y="241.20" font-family="Liberation Sans" font-weight="bold" font-size="7.7" fill="#fff">Strategy</text><text x="354.10" y="249.70" font-family="Liberation Sans" font-size="7.7" fill="#f4f5fb">Financial</text></g><clipPath id="bc4"><rect x="406.90" y="231.70" width="169.90" height="20.45"/></clipPath><rect x="406.90" y="231.70" width="172.90" height="20.45" rx="2.6" fill="#7985c5"/><g clip-path="url(#bc4)"><text x="408.90" y="241.20" font-family="Liberation Sans" font-weight="bold" font-size="7.7" fill="#fff">Strategy Advice</text><text x="408.90" y="249.70" font-family="Liberation Sans" font-size="7.7" fill="#f4f5fb">Business Plan</text></g><rect x="452.91" y="232.00" width="8.04" height="19.80" fill="rgb(190,190,194)" fill-opacity="0.85"/><rect x="462.06" y="232.00" width="8.04" height="19.80" fill="rgb(190,190,194)" fill-opacity="0.85"/><rect x="507.77" y="232.00" width="8.04" height="19.80" fill="rgb(190,190,194)" fill-opacity="0.85"/><rect x="516.91" y="232.00" width="8.04" height="19.80" fill="rgb(190,190,194)" fill-opacity="0.85"/><rect x="526.06" y="232.00" width="8.04" height="19.80" fill="rgb(190,190,194)" fill-opacity="0.85"/><rect x="535.20" y="232.00" width="8.04" height="19.80" fill="rgb(190,190,194)" fill-opacity="0.85"/><rect x="379.77" y="253.30" width="8.04" height="20.40" fill="#c9c9c9"/><rect x="388.91" y="253.30" width="8.04" height="20.40" fill="#c9c9c9"/><rect x="398.06" y="253.30" width="8.04" height="20.40" fill="#c9c9c9"/><rect x="443.77" y="253.30" width="8.04" height="20.40" fill="#c9c9c9"/><rect x="452.91" y="253.30" width="8.04" height="20.40" fill="#c9c9c9"/><rect x="462.06" y="253.30" width="8.04" height="20.40" fill="#c9c9c9"/><rect x="699.77" y="253.30" width="8.04" height="20.40" fill="#c9c9c9"/><rect x="708.91" y="253.30" width="8.04" height="20.40" fill="#c9c9c9"/><rect x="718.06" y="253.30" width="8.04" height="20.40" fill="#c9c9c9"/><rect x="763.77" y="253.30" width="8.04" height="20.40" fill="#c9c9c9"/><rect x="772.91" y="253.30" width="8.04" height="20.40" fill="#c9c9c9"/><rect x="782.06" y="253.30" width="8.04" height="20.40" fill="#c9c9c9"/><rect x="791.20" y="253.30" width="8.04" height="20.40" fill="#c9c9c9"/><rect x="800.34" y="253.30" width="8.04" height="20.40" fill="#c9c9c9"/><rect x="809.49" y="253.30" width="8.04" height="20.40" fill="#c9c9c9"/><rect x="818.63" y="253.30" width="8.04" height="20.40" fill="#c9c9c9"/><rect x="827.77" y="253.30" width="8.04" height="20.40" fill="#c9c9c9"/><rect x="836.91" y="253.30" width="8.04" height="20.40" fill="#c9c9c9"/><rect x="846.06" y="253.30" width="8.04" height="20.40" fill="#c9c9c9"/><rect x="855.20" y="253.30" width="8.04" height="20.40" fill="#c9c9c9"/><rect x="864.34" y="253.30" width="8.04" height="20.40" fill="#c9c9c9"/><rect x="873.49" y="253.30" width="8.04" height="20.40" fill="#c9c9c9"/><rect x="882.63" y="253.30" width="8.04" height="20.40" fill="#c9c9c9"/><rect x="891.77" y="253.30" width="8.04" height="20.40" fill="#c9c9c9"/><rect x="900.91" y="253.30" width="8.04" height="20.40" fill="#c9c9c9"/><rect x="910.06" y="253.30" width="8.04" height="20.40" fill="#c9c9c9"/><rect x="955.77" y="253.30" width="8.04" height="20.40" fill="#c9c9c9"/><rect x="964.91" y="253.30" width="8.04" height="20.40" fill="#c9c9c9"/><rect x="974.06" y="253.30" width="8.04" height="20.40" fill="#c9c9c9"/><clipPath id="bc5"><rect x="342.90" y="253.00" width="32.40" height="21.05"/></clipPath><rect x="342.90" y="253.00" width="35.40" height="21.05" rx="2.6" fill="#7985c5"/><g clip-path="url(#bc5)"><text x="344.90" y="262.50" font-family="Liberation Sans" font-weight="bold" font-size="7.7" fill="#fff">Strategy</text><text x="344.90" y="271.00" font-family="Liberation Sans" font-size="7.7" fill="#f4f5fb">Strategy</text></g><clipPath id="bc6"><rect x="470.50" y="253.00" width="224.50" height="21.05"/></clipPath><rect x="470.50" y="253.00" width="227.50" height="21.05" rx="2.6" fill="#7985c5"/><g clip-path="url(#bc6)"><text x="472.50" y="262.50" font-family="Liberation Sans" font-weight="bold" font-size="7.7" fill="#fff">Strategy Advice</text><text x="472.50" y="271.00" font-family="Liberation Sans" font-size="7.7" fill="#f4f5fb">Business Plan</text></g><rect x="507.77" y="253.30" width="8.04" height="20.40" fill="rgb(190,190,194)" fill-opacity="0.85"/><rect x="516.91" y="253.30" width="8.04" height="20.40" fill="rgb(190,190,194)" fill-opacity="0.85"/><rect x="526.06" y="253.30" width="8.04" height="20.40" fill="rgb(190,190,194)" fill-opacity="0.85"/><rect x="535.20" y="253.30" width="8.04" height="20.40" fill="rgb(190,190,194)" fill-opacity="0.85"/><rect x="571.77" y="253.30" width="8.04" height="20.40" fill="rgb(190,190,194)" fill-opacity="0.85"/><rect x="580.91" y="253.30" width="8.04" height="20.40" fill="rgb(190,190,194)" fill-opacity="0.85"/><rect x="590.06" y="253.30" width="8.04" height="20.40" fill="rgb(190,190,194)" fill-opacity="0.85"/><rect x="635.77" y="253.30" width="8.04" height="20.40" fill="rgb(190,190,194)" fill-opacity="0.85"/><rect x="644.91" y="253.30" width="8.04" height="20.40" fill="rgb(190,190,194)" fill-opacity="0.85"/><rect x="654.06" y="253.30" width="8.04" height="20.40" fill="rgb(190,190,194)" fill-opacity="0.85"/><rect x="964.91" y="275.20" width="8.04" height="19.70" fill="#c9c9c9"/><rect x="974.06" y="275.20" width="8.04" height="19.70" fill="#c9c9c9"/><clipPath id="bc7"><rect x="342.90" y="274.90" width="571.70" height="20.35"/></clipPath><rect x="342.90" y="274.90" width="574.70" height="20.35" rx="2.6" fill="#7985c5"/><g clip-path="url(#bc7)"><text x="344.90" y="284.40" font-family="Liberation Sans" font-weight="bold" font-size="7.7" fill="#fff">Strategy Advice</text><text x="344.90" y="292.90" font-family="Liberation Sans" font-size="7.7" fill="#f4f5fb">Strategy Development</text></g><rect x="388.91" y="275.20" width="8.04" height="19.70" fill="rgb(190,190,194)" fill-opacity="0.85"/><rect x="398.06" y="275.20" width="8.04" height="19.70" fill="rgb(190,190,194)" fill-opacity="0.85"/><rect x="452.91" y="275.20" width="8.04" height="19.70" fill="rgb(190,190,194)" fill-opacity="0.85"/><rect x="462.06" y="275.20" width="8.04" height="19.70" fill="rgb(190,190,194)" fill-opacity="0.85"/><rect x="516.91" y="275.20" width="8.04" height="19.70" fill="rgb(190,190,194)" fill-opacity="0.85"/><rect x="526.06" y="275.20" width="8.04" height="19.70" fill="rgb(190,190,194)" fill-opacity="0.85"/><rect x="535.20" y="275.20" width="8.04" height="19.70" fill="rgb(190,190,194)" fill-opacity="0.85"/><rect x="580.91" y="275.20" width="8.04" height="19.70" fill="rgb(190,190,194)" fill-opacity="0.85"/><rect x="590.06" y="275.20" width="8.04" height="19.70" fill="rgb(190,190,194)" fill-opacity="0.85"/><rect x="644.91" y="275.20" width="8.04" height="19.70" fill="rgb(190,190,194)" fill-opacity="0.85"/><rect x="654.06" y="275.20" width="8.04" height="19.70" fill="rgb(190,190,194)" fill-opacity="0.85"/><rect x="708.91" y="275.20" width="8.04" height="19.70" fill="rgb(190,190,194)" fill-opacity="0.85"/><rect x="718.06" y="275.20" width="8.04" height="19.70" fill="rgb(190,190,194)" fill-opacity="0.85"/><rect x="772.91" y="275.20" width="8.04" height="19.70" fill="rgb(190,190,194)" fill-opacity="0.85"/><rect x="782.06" y="275.20" width="8.04" height="19.70" fill="rgb(190,190,194)" fill-opacity="0.85"/><rect x="836.91" y="275.20" width="8.04" height="19.70" fill="rgb(190,190,194)" fill-opacity="0.85"/><rect x="846.06" y="275.20" width="8.04" height="19.70" fill="rgb(190,190,194)" fill-opacity="0.85"/><rect x="900.91" y="275.20" width="8.04" height="19.70" fill="rgb(190,190,194)" fill-opacity="0.85"/><rect x="910.06" y="275.20" width="8.04" height="19.70" fill="rgb(190,190,194)" fill-opacity="0.85"/><rect x="388.91" y="296.40" width="8.04" height="20.40" fill="#c9c9c9"/><rect x="398.06" y="296.40" width="8.04" height="20.40" fill="#c9c9c9"/><rect x="452.91" y="296.40" width="8.04" height="20.40" fill="#c9c9c9"/><rect x="462.06" y="296.40" width="8.04" height="20.40" fill="#c9c9c9"/><rect x="507.77" y="296.40" width="8.04" height="20.40" fill="#c9c9c9"/><rect x="516.91" y="296.40" width="8.04" height="20.40" fill="#c9c9c9"/><rect x="526.06" y="296.40" width="8.04" height="20.40" fill="#c9c9c9"/><rect x="535.20" y="296.40" width="8.04" height="20.40" fill="#c9c9c9"/><rect x="580.91" y="296.40" width="8.04" height="20.40" fill="#c9c9c9"/><rect x="590.06" y="296.40" width="8.04" height="20.40" fill="#c9c9c9"/><rect x="644.91" y="296.40" width="8.04" height="20.40" fill="#c9c9c9"/><rect x="654.06" y="296.40" width="8.04" height="20.40" fill="#c9c9c9"/><rect x="708.91" y="296.40" width="8.04" height="20.40" fill="#c9c9c9"/><rect x="718.06" y="296.40" width="8.04" height="20.40" fill="#c9c9c9"/><rect x="772.91" y="296.40" width="8.04" height="20.40" fill="#c9c9c9"/><rect x="782.06" y="296.40" width="8.04" height="20.40" fill="#c9c9c9"/><rect x="800.34" y="296.40" width="8.04" height="20.40" fill="#c9c9c9"/><rect x="836.91" y="296.40" width="8.04" height="20.40" fill="#c9c9c9"/><rect x="846.06" y="296.40" width="8.04" height="20.40" fill="#c9c9c9"/><rect x="882.63" y="296.40" width="8.04" height="20.40" fill="#c9c9c9"/><rect x="900.91" y="296.40" width="8.04" height="20.40" fill="#c9c9c9"/><rect x="910.06" y="296.40" width="8.04" height="20.40" fill="#c9c9c9"/><rect x="964.91" y="296.40" width="8.04" height="20.40" fill="#c9c9c9"/><rect x="974.06" y="296.40" width="8.04" height="20.40" fill="#c9c9c9"/><rect x="388.91" y="339.60" width="8.04" height="19.70" fill="#c9c9c9"/><rect x="398.06" y="339.60" width="8.04" height="19.70" fill="#c9c9c9"/><rect x="452.91" y="339.60" width="8.04" height="19.70" fill="#c9c9c9"/><rect x="462.06" y="339.60" width="8.04" height="19.70" fill="#c9c9c9"/><rect x="516.91" y="339.60" width="8.04" height="19.70" fill="#c9c9c9"/><rect x="526.06" y="339.60" width="8.04" height="19.70" fill="#c9c9c9"/><rect x="535.20" y="339.60" width="8.04" height="19.70" fill="#c9c9c9"/><rect x="580.91" y="339.60" width="8.04" height="19.70" fill="#c9c9c9"/><rect x="590.06" y="339.60" width="8.04" height="19.70" fill="#c9c9c9"/><rect x="644.91" y="339.60" width="8.04" height="19.70" fill="#c9c9c9"/><rect x="654.06" y="339.60" width="8.04" height="19.70" fill="#c9c9c9"/><rect x="708.91" y="339.60" width="8.04" height="19.70" fill="#c9c9c9"/><rect x="718.06" y="339.60" width="8.04" height="19.70" fill="#c9c9c9"/><rect x="772.91" y="339.60" width="8.04" height="19.70" fill="#c9c9c9"/><rect x="782.06" y="339.60" width="8.04" height="19.70" fill="#c9c9c9"/><rect x="800.34" y="339.60" width="8.04" height="19.70" fill="#c9c9c9"/><rect x="836.91" y="339.60" width="8.04" height="19.70" fill="#c9c9c9"/><rect x="846.06" y="339.60" width="8.04" height="19.70" fill="#c9c9c9"/><rect x="882.63" y="339.60" width="8.04" height="19.70" fill="#c9c9c9"/><rect x="900.91" y="339.60" width="8.04" height="19.70" fill="#c9c9c9"/><rect x="910.06" y="339.60" width="8.04" height="19.70" fill="#c9c9c9"/><rect x="964.91" y="339.60" width="8.04" height="19.70" fill="#c9c9c9"/><rect x="974.06" y="339.60" width="8.04" height="19.70" fill="#c9c9c9"/><clipPath id="bc8"><rect x="342.90" y="339.30" width="22.90" height="20.35"/></clipPath><rect x="342.90" y="339.30" width="25.90" height="20.35" rx="2.6" fill="#7985c5"/><g clip-path="url(#bc8)"><text x="344.90" y="348.80" font-family="Liberation Sans" font-weight="bold" font-size="7.7" fill="#fff">Change Management</text><text x="344.90" y="357.30" font-family="Liberation Sans" font-size="7.7" fill="#f4f5fb">Concept</text></g><rect x="388.91" y="360.80" width="8.04" height="19.80" fill="#c9c9c9"/><rect x="398.06" y="360.80" width="8.04" height="19.80" fill="#c9c9c9"/><rect x="452.91" y="360.80" width="8.04" height="19.80" fill="#c9c9c9"/><rect x="462.06" y="360.80" width="8.04" height="19.80" fill="#c9c9c9"/><rect x="516.91" y="360.80" width="8.04" height="19.80" fill="#c9c9c9"/><rect x="526.06" y="360.80" width="8.04" height="19.80" fill="#c9c9c9"/><rect x="535.20" y="360.80" width="8.04" height="19.80" fill="#c9c9c9"/><rect x="580.91" y="360.80" width="8.04" height="19.80" fill="#c9c9c9"/><rect x="590.06" y="360.80" width="8.04" height="19.80" fill="#c9c9c9"/><rect x="644.91" y="360.80" width="8.04" height="19.80" fill="#c9c9c9"/><rect x="654.06" y="360.80" width="8.04" height="19.80" fill="#c9c9c9"/><rect x="708.91" y="360.80" width="8.04" height="19.80" fill="#c9c9c9"/><rect x="718.06" y="360.80" width="8.04" height="19.80" fill="#c9c9c9"/><rect x="772.91" y="360.80" width="8.04" height="19.80" fill="#c9c9c9"/><rect x="782.06" y="360.80" width="8.04" height="19.80" fill="#c9c9c9"/><rect x="800.34" y="360.80" width="8.04" height="19.80" fill="#c9c9c9"/><rect x="836.91" y="360.80" width="8.04" height="19.80" fill="#c9c9c9"/><rect x="846.06" y="360.80" width="8.04" height="19.80" fill="#c9c9c9"/><rect x="882.63" y="360.80" width="8.04" height="19.80" fill="#c9c9c9"/><rect x="900.91" y="360.80" width="8.04" height="19.80" fill="#c9c9c9"/><rect x="910.06" y="360.80" width="8.04" height="19.80" fill="#c9c9c9"/><rect x="964.91" y="360.80" width="8.04" height="19.80" fill="#c9c9c9"/><rect x="974.06" y="360.80" width="8.04" height="19.80" fill="#c9c9c9"/><clipPath id="bc9"><rect x="351.80" y="360.50" width="23.80" height="20.45"/></clipPath><rect x="351.80" y="360.50" width="26.80" height="20.45" rx="2.6" fill="#7985c5"/><g clip-path="url(#bc9)"><text x="353.80" y="370.00" font-family="Liberation Sans" font-weight="bold" font-size="7.7" fill="#fff">Change Management</text><text x="353.80" y="378.50" font-family="Liberation Sans" font-size="7.7" fill="#f4f5fb">Controlling</text></g><rect x="388.91" y="404.10" width="8.04" height="20.20" fill="#c9c9c9"/><rect x="398.06" y="404.10" width="8.04" height="20.20" fill="#c9c9c9"/><rect x="452.91" y="404.10" width="8.04" height="20.20" fill="#c9c9c9"/><rect x="462.06" y="404.10" width="8.04" height="20.20" fill="#c9c9c9"/><rect x="507.77" y="404.10" width="8.04" height="20.20" fill="#c9c9c9"/><rect x="516.91" y="404.10" width="8.04" height="20.20" fill="#c9c9c9"/><rect x="526.06" y="404.10" width="8.04" height="20.20" fill="#c9c9c9"/><rect x="535.20" y="404.10" width="8.04" height="20.20" fill="#c9c9c9"/><rect x="571.77" y="404.10" width="8.04" height="20.20" fill="#c9c9c9"/><rect x="580.91" y="404.10" width="8.04" height="20.20" fill="#c9c9c9"/><rect x="590.06" y="404.10" width="8.04" height="20.20" fill="#c9c9c9"/><rect x="599.20" y="404.10" width="8.04" height="20.20" fill="#c9c9c9"/><rect x="608.34" y="404.10" width="8.04" height="20.20" fill="#c9c9c9"/><rect x="617.49" y="404.10" width="8.04" height="20.20" fill="#c9c9c9"/><rect x="626.63" y="404.10" width="8.04" height="20.20" fill="#c9c9c9"/><rect x="635.77" y="404.10" width="8.04" height="20.20" fill="#c9c9c9"/><rect x="644.91" y="404.10" width="8.04" height="20.20" fill="#c9c9c9"/><rect x="654.06" y="404.10" width="8.04" height="20.20" fill="#c9c9c9"/><rect x="708.91" y="404.10" width="8.04" height="20.20" fill="#c9c9c9"/><rect x="718.06" y="404.10" width="8.04" height="20.20" fill="#c9c9c9"/><rect x="772.91" y="404.10" width="8.04" height="20.20" fill="#c9c9c9"/><rect x="782.06" y="404.10" width="8.04" height="20.20" fill="#c9c9c9"/><rect x="800.34" y="404.10" width="8.04" height="20.20" fill="#c9c9c9"/><rect x="836.91" y="404.10" width="8.04" height="20.20" fill="#c9c9c9"/><rect x="846.06" y="404.10" width="8.04" height="20.20" fill="#c9c9c9"/><rect x="882.63" y="404.10" width="8.04" height="20.20" fill="#c9c9c9"/><rect x="900.91" y="404.10" width="8.04" height="20.20" fill="#c9c9c9"/><rect x="910.06" y="404.10" width="8.04" height="20.20" fill="#c9c9c9"/><rect x="964.91" y="404.10" width="8.04" height="20.20" fill="#c9c9c9"/><rect x="974.06" y="404.10" width="8.04" height="20.20" fill="#c9c9c9"/><rect x="388.91" y="425.80" width="8.04" height="19.70" fill="#c9c9c9"/><rect x="398.06" y="425.80" width="8.04" height="19.70" fill="#c9c9c9"/><rect x="407.20" y="425.80" width="8.04" height="19.70" fill="#c9c9c9"/><rect x="416.34" y="425.80" width="8.04" height="19.70" fill="#c9c9c9"/><rect x="452.91" y="425.80" width="8.04" height="19.70" fill="#c9c9c9"/><rect x="462.06" y="425.80" width="8.04" height="19.70" fill="#c9c9c9"/><rect x="471.20" y="425.80" width="8.04" height="19.70" fill="#c9c9c9"/><rect x="480.34" y="425.80" width="8.04" height="19.70" fill="#c9c9c9"/><rect x="507.77" y="425.80" width="8.04" height="19.70" fill="#c9c9c9"/><rect x="516.91" y="425.80" width="8.04" height="19.70" fill="#c9c9c9"/><rect x="526.06" y="425.80" width="8.04" height="19.70" fill="#c9c9c9"/><rect x="535.20" y="425.80" width="8.04" height="19.70" fill="#c9c9c9"/><rect x="544.34" y="425.80" width="8.04" height="19.70" fill="#c9c9c9"/><rect x="580.91" y="425.80" width="8.04" height="19.70" fill="#c9c9c9"/><rect x="590.06" y="425.80" width="8.04" height="19.70" fill="#c9c9c9"/><rect x="644.91" y="425.80" width="8.04" height="19.70" fill="#c9c9c9"/><rect x="654.06" y="425.80" width="8.04" height="19.70" fill="#c9c9c9"/><rect x="708.91" y="425.80" width="8.04" height="19.70" fill="#c9c9c9"/><rect x="718.06" y="425.80" width="8.04" height="19.70" fill="#c9c9c9"/><rect x="772.91" y="425.80" width="8.04" height="19.70" fill="#c9c9c9"/><rect x="782.06" y="425.80" width="8.04" height="19.70" fill="#c9c9c9"/><rect x="800.34" y="425.80" width="8.04" height="19.70" fill="#c9c9c9"/><rect x="836.91" y="425.80" width="8.04" height="19.70" fill="#c9c9c9"/><rect x="846.06" y="425.80" width="8.04" height="19.70" fill="#c9c9c9"/><rect x="882.63" y="425.80" width="8.04" height="19.70" fill="#c9c9c9"/><rect x="900.91" y="425.80" width="8.04" height="19.70" fill="#c9c9c9"/><rect x="910.06" y="425.80" width="8.04" height="19.70" fill="#c9c9c9"/><rect x="964.91" y="425.80" width="8.04" height="19.70" fill="#c9c9c9"/><rect x="974.06" y="425.80" width="8.04" height="19.70" fill="#c9c9c9"/><clipPath id="bc10"><rect x="342.90" y="425.50" width="23.30" height="20.35"/></clipPath><rect x="342.90" y="425.50" width="26.30" height="20.35" rx="2.6" fill="#7985c5"/><g clip-path="url(#bc10)"><text x="344.90" y="435.00" font-family="Liberation Sans" font-weight="bold" font-size="7.7" fill="#fff">IT-Consulting</text><text x="344.90" y="443.50" font-family="Liberation Sans" font-size="7.7" fill="#f4f5fb">Evaluation</text></g><rect x="388.91" y="447.00" width="8.04" height="19.80" fill="#c9c9c9"/><rect x="398.06" y="447.00" width="8.04" height="19.80" fill="#c9c9c9"/><rect x="644.91" y="447.00" width="8.04" height="19.80" fill="#c9c9c9"/><rect x="654.06" y="447.00" width="8.04" height="19.80" fill="#c9c9c9"/><rect x="708.91" y="447.00" width="8.04" height="19.80" fill="#c9c9c9"/><rect x="718.06" y="447.00" width="8.04" height="19.80" fill="#c9c9c9"/><rect x="727.20" y="447.00" width="8.04" height="19.80" fill="#c9c9c9"/><rect x="736.34" y="447.00" width="8.04" height="19.80" fill="#c9c9c9"/><rect x="745.49" y="447.00" width="8.04" height="19.80" fill="#c9c9c9"/><rect x="754.63" y="447.00" width="8.04" height="19.80" fill="#c9c9c9"/><rect x="763.77" y="447.00" width="8.04" height="19.80" fill="#c9c9c9"/><rect x="772.91" y="447.00" width="8.04" height="19.80" fill="#c9c9c9"/><rect x="782.06" y="447.00" width="8.04" height="19.80" fill="#c9c9c9"/><rect x="800.34" y="447.00" width="8.04" height="19.80" fill="#c9c9c9"/><rect x="836.91" y="447.00" width="8.04" height="19.80" fill="#c9c9c9"/><rect x="846.06" y="447.00" width="8.04" height="19.80" fill="#c9c9c9"/><rect x="882.63" y="447.00" width="8.04" height="19.80" fill="#c9c9c9"/><rect x="900.91" y="447.00" width="8.04" height="19.80" fill="#c9c9c9"/><rect x="910.06" y="447.00" width="8.04" height="19.80" fill="#c9c9c9"/><rect x="964.91" y="447.00" width="8.04" height="19.80" fill="#c9c9c9"/><rect x="974.06" y="447.00" width="8.04" height="19.80" fill="#c9c9c9"/><clipPath id="bc11"><rect x="342.90" y="446.70" width="4.50" height="20.45"/></clipPath><rect x="342.90" y="446.70" width="7.50" height="20.45" rx="2.6" fill="#7985c5"/><g clip-path="url(#bc11)"><text x="344.90" y="456.20" font-family="Liberation Sans" font-weight="bold" font-size="7.7" fill="#fff">I</text><text x="344.90" y="464.70" font-family="Liberation Sans" font-size="7.7" fill="#f4f5fb">1</text></g><clipPath id="bc12"><rect x="351.90" y="446.70" width="4.90" height="20.45"/></clipPath><rect x="351.90" y="446.70" width="7.90" height="20.45" rx="2.6" fill="#7985c5"/><g clip-path="url(#bc12)"><text x="353.90" y="456.20" font-family="Liberation Sans" font-weight="bold" font-size="7.7" fill="#fff">I</text><text x="353.90" y="464.70" font-family="Liberation Sans" font-size="7.7" fill="#f4f5fb">1</text></g><clipPath id="bc13"><rect x="361.30" y="446.70" width="14.30" height="20.45"/></clipPath><rect x="361.30" y="446.70" width="17.30" height="20.45" rx="2.6" fill="#7985c5"/><g clip-path="url(#bc13)"><text x="363.30" y="456.20" font-family="Liberation Sans" font-weight="bold" font-size="7.7" fill="#fff">IT-Consulting</text><text x="363.30" y="464.70" font-family="Liberation Sans" font-size="7.7" fill="#f4f5fb">Support</text></g><clipPath id="bc14"><rect x="407.20" y="446.70" width="233.00" height="20.45"/></clipPath><rect x="407.20" y="446.70" width="236.00" height="20.45" rx="2.6" fill="#7985c5"/><g clip-path="url(#bc14)"><text x="409.20" y="456.20" font-family="Liberation Sans" font-weight="bold" font-size="7.7" fill="#fff">IT-Consulting</text><text x="409.20" y="464.70" font-family="Liberation Sans" font-size="7.7" fill="#f4f5fb">Support</text></g><rect x="452.91" y="447.00" width="8.04" height="19.80" fill="rgb(190,190,194)" fill-opacity="0.85"/><rect x="462.06" y="447.00" width="8.04" height="19.80" fill="rgb(190,190,194)" fill-opacity="0.85"/><rect x="516.91" y="447.00" width="8.04" height="19.80" fill="rgb(190,190,194)" fill-opacity="0.85"/><rect x="526.06" y="447.00" width="8.04" height="19.80" fill="rgb(190,190,194)" fill-opacity="0.85"/><rect x="535.20" y="447.00" width="8.04" height="19.80" fill="rgb(190,190,194)" fill-opacity="0.85"/><rect x="580.91" y="447.00" width="8.04" height="19.80" fill="rgb(190,190,194)" fill-opacity="0.85"/><rect x="590.06" y="447.00" width="8.04" height="19.80" fill="rgb(190,190,194)" fill-opacity="0.85"/><rect x="452.91" y="468.30" width="8.04" height="20.10" fill="#c9c9c9"/><rect x="462.06" y="468.30" width="8.04" height="20.10" fill="#c9c9c9"/><rect x="471.20" y="468.30" width="8.04" height="20.10" fill="#c9c9c9"/><rect x="480.34" y="468.30" width="8.04" height="20.10" fill="#c9c9c9"/><rect x="489.49" y="468.30" width="8.04" height="20.10" fill="#c9c9c9"/><rect x="498.63" y="468.30" width="8.04" height="20.10" fill="#c9c9c9"/><rect x="507.77" y="468.30" width="8.04" height="20.10" fill="#c9c9c9"/><rect x="516.91" y="468.30" width="8.04" height="20.10" fill="#c9c9c9"/><rect x="526.06" y="468.30" width="8.04" height="20.10" fill="#c9c9c9"/><rect x="535.20" y="468.30" width="8.04" height="20.10" fill="#c9c9c9"/><rect x="580.91" y="468.30" width="8.04" height="20.10" fill="#c9c9c9"/><rect x="590.06" y="468.30" width="8.04" height="20.10" fill="#c9c9c9"/><rect x="644.91" y="468.30" width="8.04" height="20.10" fill="#c9c9c9"/><rect x="654.06" y="468.30" width="8.04" height="20.10" fill="#c9c9c9"/><rect x="708.91" y="468.30" width="8.04" height="20.10" fill="#c9c9c9"/><rect x="718.06" y="468.30" width="8.04" height="20.10" fill="#c9c9c9"/><rect x="772.91" y="468.30" width="8.04" height="20.10" fill="#c9c9c9"/><rect x="782.06" y="468.30" width="8.04" height="20.10" fill="#c9c9c9"/><rect x="800.34" y="468.30" width="8.04" height="20.10" fill="#c9c9c9"/><rect x="836.91" y="468.30" width="8.04" height="20.10" fill="#c9c9c9"/><rect x="846.06" y="468.30" width="8.04" height="20.10" fill="#c9c9c9"/><rect x="882.63" y="468.30" width="8.04" height="20.10" fill="#c9c9c9"/><rect x="900.91" y="468.30" width="8.04" height="20.10" fill="#c9c9c9"/><rect x="910.06" y="468.30" width="8.04" height="20.10" fill="#c9c9c9"/><rect x="964.91" y="468.30" width="8.04" height="20.10" fill="#c9c9c9"/><rect x="974.06" y="468.30" width="8.04" height="20.10" fill="#c9c9c9"/><clipPath id="bc15"><rect x="352.10" y="468.00" width="96.50" height="20.75"/></clipPath><rect x="352.10" y="468.00" width="99.50" height="20.75" rx="2.6" fill="#7985c5"/><g clip-path="url(#bc15)"><text x="354.10" y="477.50" font-family="Liberation Sans" font-weight="bold" font-size="7.7" fill="#fff">Ward Energy</text><text x="354.10" y="486.00" font-family="Liberation Sans" font-size="7.7" fill="#f4f5fb">Presentation</text></g><rect x="388.91" y="468.30" width="8.04" height="20.10" fill="rgb(190,190,194)" fill-opacity="0.85"/><rect x="398.06" y="468.30" width="8.04" height="20.10" fill="rgb(190,190,194)" fill-opacity="0.85"/><rect x="507.77" y="489.90" width="8.04" height="19.80" fill="#c9c9c9"/><rect x="516.91" y="489.90" width="8.04" height="19.80" fill="#c9c9c9"/><rect x="526.06" y="489.90" width="8.04" height="19.80" fill="#c9c9c9"/><rect x="535.20" y="489.90" width="8.04" height="19.80" fill="#c9c9c9"/><rect x="708.91" y="489.90" width="8.04" height="19.80" fill="#c9c9c9"/><rect x="718.06" y="489.90" width="8.04" height="19.80" fill="#c9c9c9"/><rect x="772.91" y="489.90" width="8.04" height="19.80" fill="#c9c9c9"/><rect x="782.06" y="489.90" width="8.04" height="19.80" fill="#c9c9c9"/><rect x="800.34" y="489.90" width="8.04" height="19.80" fill="#c9c9c9"/><rect x="836.91" y="489.90" width="8.04" height="19.80" fill="#c9c9c9"/><rect x="846.06" y="489.90" width="8.04" height="19.80" fill="#c9c9c9"/><rect x="882.63" y="489.90" width="8.04" height="19.80" fill="#c9c9c9"/><rect x="900.91" y="489.90" width="8.04" height="19.80" fill="#c9c9c9"/><rect x="910.06" y="489.90" width="8.04" height="19.80" fill="#c9c9c9"/><rect x="964.91" y="489.90" width="8.04" height="19.80" fill="#c9c9c9"/><rect x="974.06" y="489.90" width="8.04" height="19.80" fill="#c9c9c9"/><clipPath id="bc16"><rect x="352.10" y="489.60" width="14.10" height="20.45"/></clipPath><rect x="352.10" y="489.60" width="17.10" height="20.45" rx="2.6" fill="#7985c5"/><g clip-path="url(#bc16)"><text x="354.10" y="499.10" font-family="Liberation Sans" font-weight="bold" font-size="7.7" fill="#fff">IT-Consulting</text><text x="354.10" y="507.60" font-family="Liberation Sans" font-size="7.7" fill="#f4f5fb">Launch</text></g><clipPath id="bc17"><rect x="370.90" y="489.60" width="132.40" height="20.45"/></clipPath><rect x="370.90" y="489.60" width="135.40" height="20.45" rx="2.6" fill="#7985c5"/><g clip-path="url(#bc17)"><text x="372.90" y="499.10" font-family="Liberation Sans" font-weight="bold" font-size="7.7" fill="#fff">Ward Energy</text><text x="372.90" y="507.60" font-family="Liberation Sans" font-size="7.7" fill="#f4f5fb">Presentation</text></g><clipPath id="bc18"><rect x="543.90" y="489.60" width="161.10" height="20.45"/></clipPath><rect x="543.90" y="489.60" width="164.10" height="20.45" rx="2.6" fill="#7985c5"/><g clip-path="url(#bc18)"><text x="545.90" y="499.10" font-family="Liberation Sans" font-weight="bold" font-size="7.7" fill="#fff">IT-Consulting</text><text x="545.90" y="507.60" font-family="Liberation Sans" font-size="7.7" fill="#f4f5fb">Support</text></g><rect x="388.91" y="489.90" width="8.04" height="19.80" fill="rgb(190,190,194)" fill-opacity="0.85"/><rect x="398.06" y="489.90" width="8.04" height="19.80" fill="rgb(190,190,194)" fill-opacity="0.85"/><rect x="452.91" y="489.90" width="8.04" height="19.80" fill="rgb(190,190,194)" fill-opacity="0.85"/><rect x="462.06" y="489.90" width="8.04" height="19.80" fill="rgb(190,190,194)" fill-opacity="0.85"/><rect x="580.91" y="489.90" width="8.04" height="19.80" fill="rgb(190,190,194)" fill-opacity="0.85"/><rect x="590.06" y="489.90" width="8.04" height="19.80" fill="rgb(190,190,194)" fill-opacity="0.85"/><rect x="644.91" y="489.90" width="8.04" height="19.80" fill="rgb(190,190,194)" fill-opacity="0.85"/><rect x="654.06" y="489.90" width="8.04" height="19.80" fill="rgb(190,190,194)" fill-opacity="0.85"/><rect x="470.9" y="296.2" width="298.6" height="19.2" fill="rgb(193,215,242)" fill-opacity="0.55" stroke="#a9d2ea" stroke-width="0.8"/></g><g clip-path="url(#nc)"><path d="M161.8 175.80 L164 177.90 L166.2 175.80" fill="none" stroke="#aaa" stroke-width="0.8"/><rect x="170.90" y="169.90" width="5.4" height="10.6" fill="#fff"/><path d="M171.20 170.70 Q173.60 170.10 173.80 172.70 Q173.60 174.90 171.20 174.90" fill="none" stroke="#4a9ae0" stroke-width="1.1"/><path d="M171.20 176.50 Q174.00 176.50 175.60 179.30" fill="none" stroke="#4a9ae0" stroke-width="1.1"/><rect x="176.10" y="170.00" width="5" height="10.4" rx="0.9" fill="#2a2a2a"/><rect x="177.10" y="171.10" width="3" height="6.6" fill="#9cc4ec"/><path d="M177.10 173.30 H180.10 M177.10 175.50 H180.10 M178.60 171.10 V177.70" stroke="#2a2a2a" stroke-width="0.5"/><circle cx="189.3" cy="194.40" r="2.6" fill="none" stroke="#4e96dc" stroke-width="1.05"/><path d="M184.9 201.60 Q185.2 197.20 189.3 197.20 Q193.4 197.20 193.7 201.60" fill="none" stroke="#4e96dc" stroke-width="1.05"/><rect x="288.5" y="192.20" width="9.2" height="9.4" rx="0.8" fill="#fbfbfb" stroke="#c4c4c4" stroke-width="0.7"/><rect x="289.1" y="192.90" width="8" height="1.7" rx="0.6" fill="#ee8a3c"/><path d="M291.8 196.00 L294.2 198.20" stroke="#555" stroke-width="1.3"/><path d="M290.8 199.30 H295" stroke="#3db5a0" stroke-width="1.7"/><path d="M294.3 197.40 L297.2 199.40 L294.3 201.40 Z" fill="#3db5a0"/><circle cx="189.3" cy="236.20" r="2.6" fill="none" stroke="#4e96dc" stroke-width="1.05"/><path d="M184.9 243.40 Q185.2 239.00 189.3 239.00 Q193.4 239.00 193.7 243.40" fill="none" stroke="#4e96dc" stroke-width="1.05"/><rect x="288.5" y="234.00" width="9.2" height="9.4" rx="0.8" fill="#fbfbfb" stroke="#c4c4c4" stroke-width="0.7"/><rect x="289.1" y="234.70" width="8" height="1.7" rx="0.6" fill="#ee8a3c"/><path d="M291.8 237.80 L294.2 240.00" stroke="#555" stroke-width="1.3"/><path d="M290.8 241.10 H295" stroke="#3db5a0" stroke-width="1.7"/><path d="M294.3 239.20 L297.2 241.20 L294.3 243.20 Z" fill="#3db5a0"/><circle cx="189.3" cy="257.50" r="2.6" fill="none" stroke="#4e96dc" stroke-width="1.05"/><path d="M184.9 264.70 Q185.2 260.30 189.3 260.30 Q193.4 260.30 193.7 264.70" fill="none" stroke="#4e96dc" stroke-width="1.05"/><rect x="288.5" y="255.30" width="9.2" height="9.4" rx="0.8" fill="#fbfbfb" stroke="#c4c4c4" stroke-width="0.7"/><rect x="289.1" y="256.00" width="8" height="1.7" rx="0.6" fill="#ee8a3c"/><path d="M291.8 259.10 L294.2 261.30" stroke="#555" stroke-width="1.3"/><path d="M290.8 262.40 H295" stroke="#3db5a0" stroke-width="1.7"/><path d="M294.3 260.50 L297.2 262.50 L294.3 264.50 Z" fill="#3db5a0"/><circle cx="189.3" cy="279.40" r="2.6" fill="none" stroke="#4e96dc" stroke-width="1.05"/><path d="M184.9 286.60 Q185.2 282.20 189.3 282.20 Q193.4 282.20 193.7 286.60" fill="none" stroke="#4e96dc" stroke-width="1.05"/><rect x="288.5" y="277.20" width="9.2" height="9.4" rx="0.8" fill="#fbfbfb" stroke="#c4c4c4" stroke-width="0.7"/><rect x="289.1" y="277.90" width="8" height="1.7" rx="0.6" fill="#ee8a3c"/><path d="M291.8 281.00 L294.2 283.20" stroke="#555" stroke-width="1.3"/><path d="M290.8 284.30 H295" stroke="#3db5a0" stroke-width="1.7"/><path d="M294.3 282.40 L297.2 284.40 L294.3 286.40 Z" fill="#3db5a0"/><circle cx="189.3" cy="300.60" r="2.6" fill="none" stroke="#4e96dc" stroke-width="1.05"/><path d="M184.9 307.80 Q185.2 303.40 189.3 303.40 Q193.4 303.40 193.7 307.80" fill="none" stroke="#4e96dc" stroke-width="1.05"/><rect x="288.5" y="298.40" width="9.2" height="9.4" rx="0.8" fill="#fbfbfb" stroke="#c4c4c4" stroke-width="0.7"/><rect x="289.1" y="299.10" width="8" height="1.7" rx="0.6" fill="#ee8a3c"/><path d="M291.8 302.20 L294.2 304.40" stroke="#555" stroke-width="1.3"/><path d="M290.8 305.50 H295" stroke="#3db5a0" stroke-width="1.7"/><path d="M294.3 303.60 L297.2 305.60 L294.3 307.60 Z" fill="#3db5a0"/><path d="M161.8 326.10 L164 328.20 L166.2 326.10" fill="none" stroke="#aaa" stroke-width="0.8"/><rect x="170.90" y="320.20" width="5.4" height="10.6" fill="#fff"/><path d="M171.20 321.00 Q173.60 320.40 173.80 323.00 Q173.60 325.20 171.20 325.20" fill="none" stroke="#4a9ae0" stroke-width="1.1"/><path d="M171.20 326.80 Q174.00 326.80 175.60 329.60" fill="none" stroke="#4a9ae0" stroke-width="1.1"/><rect x="176.10" y="320.30" width="5" height="10.4" rx="0.9" fill="#2a2a2a"/><rect x="177.10" y="321.40" width="3" height="6.6" fill="#9cc4ec"/><path d="M177.10 323.60 H180.10 M177.10 325.80 H180.10 M178.60 321.40 V328.00" stroke="#2a2a2a" stroke-width="0.5"/><circle cx="189.3" cy="343.80" r="2.6" fill="none" stroke="#4e96dc" stroke-width="1.05"/><path d="M184.9 351.00 Q185.2 346.60 189.3 346.60 Q193.4 346.60 193.7 351.00" fill="none" stroke="#4e96dc" stroke-width="1.05"/><rect x="288.5" y="341.60" width="9.2" height="9.4" rx="0.8" fill="#fbfbfb" stroke="#c4c4c4" stroke-width="0.7"/><rect x="289.1" y="342.30" width="8" height="1.7" rx="0.6" fill="#ee8a3c"/><path d="M291.8 345.40 L294.2 347.60" stroke="#555" stroke-width="1.3"/><path d="M290.8 348.70 H295" stroke="#3db5a0" stroke-width="1.7"/><path d="M294.3 346.80 L297.2 348.80 L294.3 350.80 Z" fill="#3db5a0"/><circle cx="189.3" cy="365.00" r="2.6" fill="none" stroke="#4e96dc" stroke-width="1.05"/><path d="M184.9 372.20 Q185.2 367.80 189.3 367.80 Q193.4 367.80 193.7 372.20" fill="none" stroke="#4e96dc" stroke-width="1.05"/><rect x="288.5" y="362.80" width="9.2" height="9.4" rx="0.8" fill="#fbfbfb" stroke="#c4c4c4" stroke-width="0.7"/><rect x="289.1" y="363.50" width="8" height="1.7" rx="0.6" fill="#ee8a3c"/><path d="M291.8 366.60 L294.2 368.80" stroke="#555" stroke-width="1.3"/><path d="M290.8 369.90 H295" stroke="#3db5a0" stroke-width="1.7"/><path d="M294.3 368.00 L297.2 370.00 L294.3 372.00 Z" fill="#3db5a0"/><path d="M161.8 389.90 L164 392.00 L166.2 389.90" fill="none" stroke="#aaa" stroke-width="0.8"/><rect x="170.90" y="384.00" width="5.4" height="10.6" fill="#fff"/><path d="M171.20 384.80 Q173.60 384.20 173.80 386.80 Q173.60 389.00 171.20 389.00" fill="none" stroke="#4a9ae0" stroke-width="1.1"/><path d="M171.20 390.60 Q174.00 390.60 175.60 393.40" fill="none" stroke="#4a9ae0" stroke-width="1.1"/><rect x="176.10" y="384.10" width="5" height="10.4" rx="0.9" fill="#2a2a2a"/><rect x="177.10" y="385.20" width="3" height="6.6" fill="#9cc4ec"/><path d="M177.10 387.40 H180.10 M177.10 389.60 H180.10 M178.60 385.20 V391.80" stroke="#2a2a2a" stroke-width="0.5"/><circle cx="189.3" cy="408.30" r="2.6" fill="none" stroke="#4e96dc" stroke-width="1.05"/><path d="M184.9 415.50 Q185.2 411.10 189.3 411.10 Q193.4 411.10 193.7 415.50" fill="none" stroke="#4e96dc" stroke-width="1.05"/><rect x="288.5" y="406.10" width="9.2" height="9.4" rx="0.8" fill="#fbfbfb" stroke="#c4c4c4" stroke-width="0.7"/><rect x="289.1" y="406.80" width="8" height="1.7" rx="0.6" fill="#ee8a3c"/><path d="M291.8 409.90 L294.2 412.10" stroke="#555" stroke-width="1.3"/><path d="M290.8 413.20 H295" stroke="#3db5a0" stroke-width="1.7"/><path d="M294.3 411.30 L297.2 413.30 L294.3 415.30 Z" fill="#3db5a0"/><circle cx="189.3" cy="430.00" r="2.6" fill="none" stroke="#4e96dc" stroke-width="1.05"/><path d="M184.9 437.20 Q185.2 432.80 189.3 432.80 Q193.4 432.80 193.7 437.20" fill="none" stroke="#4e96dc" stroke-width="1.05"/><rect x="288.5" y="427.80" width="9.2" height="9.4" rx="0.8" fill="#fbfbfb" stroke="#c4c4c4" stroke-width="0.7"/><rect x="289.1" y="428.50" width="8" height="1.7" rx="0.6" fill="#ee8a3c"/><path d="M291.8 431.60 L294.2 433.80" stroke="#555" stroke-width="1.3"/><path d="M290.8 434.90 H295" stroke="#3db5a0" stroke-width="1.7"/><path d="M294.3 433.00 L297.2 435.00 L294.3 437.00 Z" fill="#3db5a0"/><circle cx="189.3" cy="451.20" r="2.6" fill="none" stroke="#4e96dc" stroke-width="1.05"/><path d="M184.9 458.40 Q185.2 454.00 189.3 454.00 Q193.4 454.00 193.7 458.40" fill="none" stroke="#4e96dc" stroke-width="1.05"/><rect x="288.5" y="449.00" width="9.2" height="9.4" rx="0.8" fill="#fbfbfb" stroke="#c4c4c4" stroke-width="0.7"/><rect x="289.1" y="449.70" width="8" height="1.7" rx="0.6" fill="#ee8a3c"/><path d="M291.8 452.80 L294.2 455.00" stroke="#555" stroke-width="1.3"/><path d="M290.8 456.10 H295" stroke="#3db5a0" stroke-width="1.7"/><path d="M294.3 454.20 L297.2 456.20 L294.3 458.20 Z" fill="#3db5a0"/><circle cx="189.3" cy="472.50" r="2.6" fill="none" stroke="#4e96dc" stroke-width="1.05"/><path d="M184.9 479.70 Q185.2 475.30 189.3 475.30 Q193.4 475.30 193.7 479.70" fill="none" stroke="#4e96dc" stroke-width="1.05"/><rect x="288.5" y="470.30" width="9.2" height="9.4" rx="0.8" fill="#fbfbfb" stroke="#c4c4c4" stroke-width="0.7"/><rect x="289.1" y="471.00" width="8" height="1.7" rx="0.6" fill="#ee8a3c"/><path d="M291.8 474.10 L294.2 476.30" stroke="#555" stroke-width="1.3"/><path d="M290.8 477.40 H295" stroke="#3db5a0" stroke-width="1.7"/><path d="M294.3 475.50 L297.2 477.50 L294.3 479.50 Z" fill="#3db5a0"/><circle cx="189.3" cy="494.10" r="2.6" fill="none" stroke="#4e96dc" stroke-width="1.05"/><path d="M184.9 501.30 Q185.2 496.90 189.3 496.90 Q193.4 496.90 193.7 501.30" fill="none" stroke="#4e96dc" stroke-width="1.05"/><rect x="288.5" y="491.90" width="9.2" height="9.4" rx="0.8" fill="#fbfbfb" stroke="#c4c4c4" stroke-width="0.7"/><rect x="289.1" y="492.60" width="8" height="1.7" rx="0.6" fill="#ee8a3c"/><path d="M291.8 495.70 L294.2 497.90" stroke="#555" stroke-width="1.3"/><path d="M290.8 499.00 H295" stroke="#3db5a0" stroke-width="1.7"/><path d="M294.3 497.10 L297.2 499.10 L294.3 501.10 Z" fill="#3db5a0"/><path d="M161.8 519.00 L164 521.10 L166.2 519.00" fill="none" stroke="#aaa" stroke-width="0.8"/><rect x="170.90" y="513.10" width="5.4" height="10.6" fill="#fff"/><path d="M171.20 513.90 Q173.60 513.30 173.80 515.90 Q173.60 518.10 171.20 518.10" fill="none" stroke="#4a9ae0" stroke-width="1.1"/><path d="M171.20 519.70 Q174.00 519.70 175.60 522.50" fill="none" stroke="#4a9ae0" stroke-width="1.1"/><rect x="176.10" y="513.20" width="5" height="10.4" rx="0.9" fill="#2a2a2a"/><rect x="177.10" y="514.30" width="3" height="6.6" fill="#9cc4ec"/><path d="M177.10 516.50 H180.10 M177.10 518.70 H180.10 M178.60 514.30 V520.90" stroke="#2a2a2a" stroke-width="0.5"/><rect x="184.50" y="535.50" width="5.4" height="10.6" fill="#fff"/><path d="M184.80 536.30 Q187.20 535.70 187.40 538.30 Q187.20 540.50 184.80 540.50" fill="none" stroke="#4a9ae0" stroke-width="1.1"/><path d="M184.80 542.10 Q187.60 542.10 189.20 544.90" fill="none" stroke="#4a9ae0" stroke-width="1.1"/><rect x="189.70" y="535.60" width="5" height="10.4" rx="0.9" fill="#2a2a2a"/><rect x="190.70" y="536.70" width="3" height="6.6" fill="#9cc4ec"/><path d="M190.70 538.90 H193.70 M190.70 541.10 H193.70 M192.20 536.70 V543.30" stroke="#2a2a2a" stroke-width="0.5"/></g></svg><div style="position:absolute;left:156px;top:167.20px;width:186px;height:372.30px;overflow:hidden;"><div class="t" style="left:27.70px;top:5.55px;font-size:7.5px;line-height:7.5px;color:#444;font-weight:normal;">Strategy Consulting</div></div><div class="t" style="left:197.20px;top:193.84px;font-size:7.4px;line-height:7.4px;color:#444;font-weight:normal;">Brown Jeremy</div><div class="t" style="left:197.20px;top:235.64px;font-size:7.4px;line-height:7.4px;color:#444;font-weight:normal;">Robinson Bret</div><div class="t" style="left:197.20px;top:256.94px;font-size:7.4px;line-height:7.4px;color:#444;font-weight:normal;">Thompson Grace</div><div class="t" style="left:197.20px;top:278.84px;font-size:7.4px;line-height:7.4px;color:#444;font-weight:normal;">Blank Robert</div><div class="t" style="left:197.20px;top:300.04px;font-size:7.4px;line-height:7.4px;color:#444;font-weight:normal;">Connor John</div><div style="position:absolute;left:156px;top:317.50px;width:186px;height:222.00px;overflow:hidden;"><div class="t" style="left:27.70px;top:5.55px;font-size:7.5px;line-height:7.5px;color:#444;font-weight:normal;">Change Management</div></div><div class="t" style="left:197.20px;top:343.24px;font-size:7.4px;line-height:7.4px;color:#444;font-weight:normal;">Taylor Jay</div><div class="t" style="left:197.20px;top:364.44px;font-size:7.4px;line-height:7.4px;color:#444;font-weight:normal;">Wright Carrie</div><div style="position:absolute;left:156px;top:381.30px;width:186px;height:158.20px;overflow:hidden;"><div class="t" style="left:27.70px;top:5.55px;font-size:7.5px;line-height:7.5px;color:#444;font-weight:normal;">IT-Consulting</div></div><div class="t" style="left:197.20px;top:407.74px;font-size:7.4px;line-height:7.4px;color:#444;font-weight:normal;">Williams Kiara</div><div class="t" style="left:197.20px;top:429.44px;font-size:7.4px;line-height:7.4px;color:#444;font-weight:normal;">Johnson Earl</div><div class="t" style="left:197.20px;top:450.64px;font-size:7.4px;line-height:7.4px;color:#444;font-weight:normal;">Roberts Jim</div><div class="t" style="left:197.20px;top:471.94px;font-size:7.4px;line-height:7.4px;color:#444;font-weight:normal;">Walker Maggie</div><div class="t" style="left:197.20px;top:493.54px;font-size:7.4px;line-height:7.4px;color:#444;font-weight:normal;">Stevans Collin</div><div style="position:absolute;left:156px;top:510.40px;width:186px;height:29.10px;overflow:hidden;"><div class="t" style="left:27.70px;top:5.55px;font-size:7.5px;line-height:7.5px;color:#444;font-weight:normal;">Office</div></div><div style="position:absolute;left:156px;top:532.20px;width:186px;height:7.30px;overflow:hidden;"><div class="t" style="left:41.20px;top:4.85px;font-size:7.5px;line-height:7.5px;color:#444;font-weight:normal;">Marketing &amp; PR</div></div><svg style="left:0;top:0" width="980" height="551"><path d="M154 311.4 L151.4 314.7 L154 318" fill="none" stroke="#d4d4d4" stroke-width="0.8"/></svg><div class="b" style="left:342.00px;top:127.60px;width:1.00px;height:411.90px;background:#d6d6d6;"></div><div class="b" style="left:969.50px;top:167.40px;width:9.30px;height:372.10px;background:#f1f1f1;"></div><div class="b" style="left:970.20px;top:178.90px;width:7.60px;height:207.10px;background:#c1c1c1;"></div><div class="b" style="left:156.00px;top:539.50px;width:186.20px;height:10.30px;background:#eeeeee;"></div><div class="b" style="left:342.20px;top:539.50px;width:627.30px;height:10.30px;background:#f1f1f1;"></div><div class="b" style="left:426.00px;top:540.30px;width:448.00px;height:8.70px;background:#c3c3c3;"></div><div class="b" style="left:969.50px;top:539.50px;width:9.30px;height:10.30px;background:#ffffff;"></div><svg style="left:0;top:0" width="980" height="551" viewBox="0 0 980 551">
<path d="M971.4 175.4 L973.7 172.6 L976 175.4 Z" fill="#666"/>
<path d="M971.4 531.4 L973.7 534.2 L976 531.4 Z" fill="#555"/>
<path d="M349.4 542.4 L346.6 544.6 L349.4 546.8 Z" fill="#444"/>
<path d="M962 542.4 L964.8 544.6 L962 546.8 Z" fill="#444"/>
<path d="M162.4 542.6 L160 544.6 L162.4 546.6 Z" fill="#bbb"/>
<path d="M335.6 542.6 L338 544.6 L335.6 546.6 Z" fill="#bbb"/>
</svg><div class="b" style="left:470.70px;top:253.20px;width:80.10px;height:39.20px;background:#f6f6f6;border:1px solid #e0e0e0;border-radius:3px;box-shadow:0 1px 2px rgba(0,0,0,0.18);"></div><div class="b" style="left:779.90px;top:323.70px;width:67.30px;height:22.40px;background:#f6f6f6;border:1px solid #e0e0e0;border-radius:3px;box-shadow:0 1px 2px rgba(0,0,0,0.18);"></div><svg style="left:486.30px;top:255.70px" width="13" height="13.4" viewBox="0 0 13 13.4"><rect x="0.3" y="0.3" width="12.4" height="12.8" fill="#fff" stroke="#d8d8d8" stroke-width="0.6"/><rect x="0.3" y="0.3" width="12.4" height="4.4" fill="#4257b2"/><text x="6.5" y="3.9" font-size="3.8" text-anchor="middle" fill="#fff" font-family="Liberation Sans" font-weight="bold">Mar</text><text x="6.5" y="11.8" font-size="6.4" text-anchor="middle" fill="#444" font-family="Liberation Sans">26</text></svg><svg style="left:486.30px;top:272.60px" width="13" height="13.4" viewBox="0 0 13 13.4"><rect x="0.3" y="0.3" width="12.4" height="12.8" fill="#fff" stroke="#d8d8d8" stroke-width="0.6"/><rect x="0.3" y="0.3" width="12.4" height="4.4" fill="#4257b2"/><text x="6.5" y="3.9" font-size="3.8" text-anchor="middle" fill="#fff" font-family="Liberation Sans" font-weight="bold">Apr</text><text x="6.5" y="11.8" font-size="6.4" text-anchor="middle" fill="#444" font-family="Liberation Sans">27</text></svg><svg style="left:783.70px;top:327.00px" width="13" height="13.4" viewBox="0 0 13 13.4"><rect x="0.3" y="0.3" width="12.4" height="12.8" fill="#fff" stroke="#d8d8d8" stroke-width="0.6"/><rect x="0.3" y="0.3" width="12.4" height="4.4" fill="#4257b2"/><text x="6.5" y="3.9" font-size="3.8" text-anchor="middle" fill="#fff" font-family="Liberation Sans" font-weight="bold">Apr</text><text x="6.5" y="11.8" font-size="6.4" text-anchor="middle" fill="#444" font-family="Liberation Sans">27</text></svg><div class="t" style="left:502.90px;top:258.48px;font-size:8.65px;line-height:8.65px;color:#333;font-weight:normal;">26.03.2018</div><div class="t" style="left:502.90px;top:275.78px;font-size:8.65px;line-height:8.65px;color:#333;font-weight:normal;">27.04.2018</div><div class="t" style="left:800.30px;top:330.28px;font-size:8.65px;line-height:8.65px;color:#333;font-weight:normal;">27.04.2018</div><svg style="left:0;top:0" width="980" height="551" viewBox="0 0 980 551">
<path d="M484 292 L487 295 L490 292 Z" fill="#f6f6f6"/>
<path d="M770.2 312 V323 L772.8 320.6 L774.8 324.8 L776.6 324 L774.6 319.8 L778 319.6 Z" fill="#fff" stroke="#222" stroke-width="0.9" stroke-linejoin="round"/>
</svg>
</body></html>
